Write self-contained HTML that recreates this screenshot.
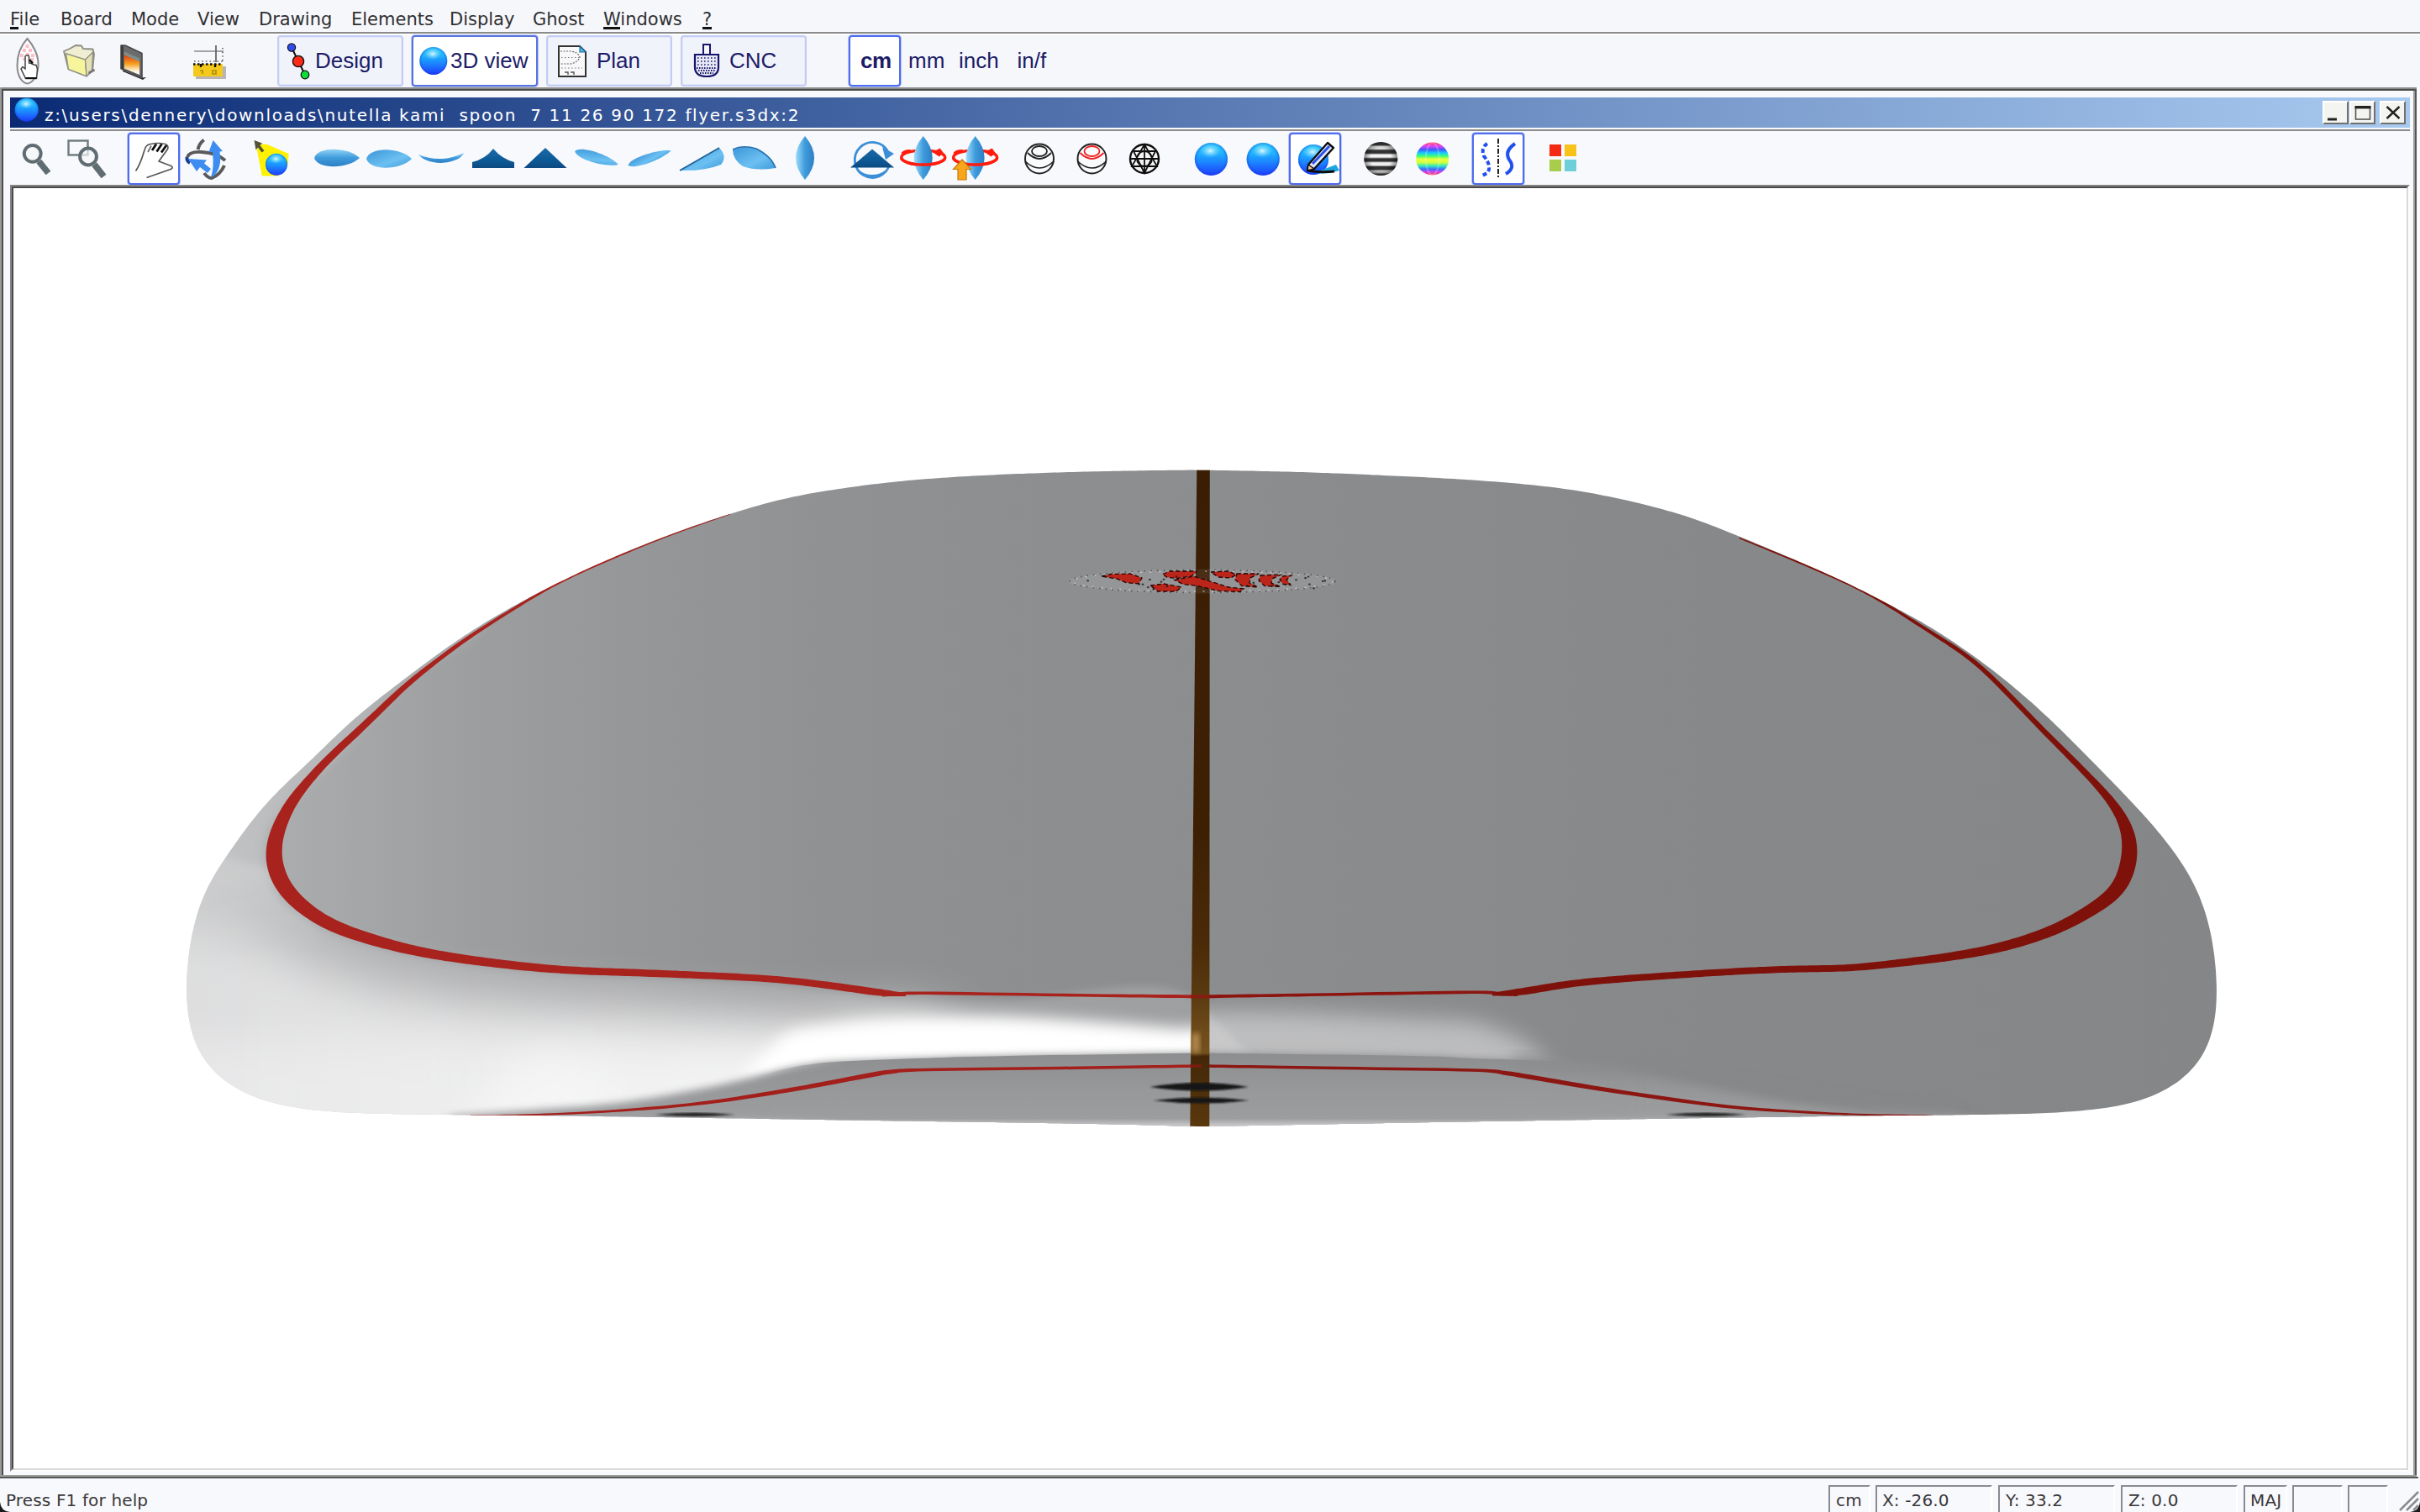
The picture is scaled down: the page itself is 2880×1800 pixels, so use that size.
<!DOCTYPE html><html><head><meta charset="utf-8"><title>Shape3d X</title><style>
html,body{margin:0;padding:0;background:#f6f7fb}
body{width:2880px;height:1800px;overflow:hidden;background:#f6f7fb;position:relative;font-family:"DejaVu Sans","Liberation Sans",sans-serif;color:#222}
.abs{position:absolute}
#menubar{left:0;top:0;width:2880px;height:38px;background:#f6f7fb}
#menubar span{position:absolute;top:9px;font-size:21px;line-height:28px;color:#303032;white-space:nowrap}
#menubar i{position:absolute;top:23px;height:2.5px;background:#111;left:0}
#menusep{left:0;top:38px;width:2880px;height:2px;background:#8b8b8c}
#menusep2{left:0;top:40px;width:2880px;height:2px;background:#fdfdfe}
.tbtn{position:absolute;top:42px;height:57px;width:146px;border:2px solid #c3cdf3;border-radius:4px;background:#f1f3fb;box-shadow:inset 0 0 0 1px #e4e8f8}
.tbtn.sel{border-color:#5873de;background:#ffffff;box-shadow:0 0 0 1px #b9c6f3}
.tlabel{position:absolute;font-family:"Liberation Sans",sans-serif;font-size:26px;line-height:30px;color:#1c1c66;white-space:nowrap}
.unit{position:absolute;top:42px;height:57px;width:58px;border:2px solid transparent;border-radius:4px}
.unit.sel{border-color:#4f6cf0;background:#fff;box-shadow:0 0 0 1px #b9c6f3}
#mdi-top{left:0;top:104px;width:2880px;height:2px;background:#8a8a8a}
#mdi-top2{left:0;top:106px;width:2880px;height:2px;background:#4c4c4c}
#mdi-left{left:0;top:104px;width:2px;height:1656px;background:#9a9a9a}
#mdi-left2{left:2px;top:106px;width:2px;height:1652px;background:#4c4c4c}
#mdi-right{left:2872px;top:108px;width:2px;height:1650px;background:#9c9c9c}
#mdi-right2{left:2874px;top:106px;width:2px;height:1654px;background:#565656}
#mdi-right3{left:2876px;top:104px;width:4px;height:1660px;background:#fbfbfd}
#mdi-bot{left:2px;top:1756px;width:2874px;height:2px;background:#9c9c9c}
#mdi-bot2{left:0px;top:1758px;width:2878px;height:2px;background:#565656}
#child{left:4px;top:108px;width:2868px;height:1648px;background:#f8f9fc}
#title{left:12px;top:116px;width:2856px;height:36px;background:linear-gradient(90deg,#0c2a74 0%,#11317b 4%,#a8caf0 100%)}
#titletext{left:53px;top:121.5px;font-size:20px;line-height:30px;color:#fff;white-space:pre;letter-spacing:1.68px;font-family:"DejaVu Sans",sans-serif}
#titleline{left:12px;top:154px;width:2856px;height:2px;background:#8c8c8c}
.wbtn{position:absolute;top:120px;width:27px;height:24px;background:#f4f4f0;border-left:2px solid #fff;border-top:2px solid #fff;border-right:2px solid #707070;border-bottom:2px solid #707070}
#canvas-b1{left:12px;top:220px;width:2852px;height:1528px;border-style:solid;border-width:2px;border-color:#868686 #fdfdfe #fdfdfe #868686}
#canvas{left:14px;top:222px;width:2848px;height:1524px;border-style:solid;border-width:2px;border-color:#4a4a4a #d9d9d9 #d9d9d9 #4a4a4a;background:#fff}
.ibtn{position:absolute;top:158px;width:58px;height:58px;border:2px solid #4f6cf0;border-radius:4px;background:#fff;box-shadow:0 0 0 1px #b9c6f3}
#status{left:0;top:1760px;width:2880px;height:40px;background:#f8f9fc}
.st{position:absolute;top:1776px;font-size:20px;line-height:20px;color:#38383a;white-space:nowrap;letter-spacing:0.15px}
.pane{position:absolute;top:1768px;height:32px;border-left:2px solid #8a8a92;border-top:2px solid #8a8a92;border-right:2px solid #fff;box-sizing:border-box}
</style></head><body>
<div id="menubar" class="abs">
<span style="left:12px">File<i style="width:10px"></i></span>
<span style="left:72px">Board</span>
<span style="left:156px">Mode</span>
<span style="left:235px">View</span>
<span style="left:308px">Drawing</span>
<span style="left:418px">Elements</span>
<span style="left:535px">Display</span>
<span style="left:634px">Ghost</span>
<span style="left:718px">Windows<i style="width:19.5px"></i></span>
<span style="left:836px">?<i style="width:10.5px"></i></span>
</div><div id="menusep" class="abs"></div><div id="menusep2" class="abs"></div>
<svg width="2880" height="1800" viewBox="0 0 2880 1800" style="position:absolute;left:0;top:0;pointer-events:none">

<defs>
<linearGradient id="sph" x1="0" y1="0" x2="0" y2="1">
 <stop offset="0" stop-color="#34d0ff"/><stop offset="0.3" stop-color="#22b4ff"/><stop offset="0.6" stop-color="#1a84ff"/><stop offset="1" stop-color="#1f3cff"/>
</linearGradient>
<radialGradient id="sphh" cx="0.5" cy="0.5" r="0.5"><stop offset="0" stop-color="#fff" stop-opacity="0.85"/><stop offset="0.5" stop-color="#c8f6ff" stop-opacity="0.4"/><stop offset="1" stop-color="#8ae8ff" stop-opacity="0"/></radialGradient>
<radialGradient id="sphr" cx="0.5" cy="0.5" r="0.5"><stop offset="0.8" stop-color="#1030d0" stop-opacity="0"/><stop offset="1" stop-color="#1030d0" stop-opacity="0.35"/></radialGradient>
<linearGradient id="brd" x1="0" y1="0" x2="0" y2="1"><stop offset="0" stop-color="#8fd2f5"/><stop offset="0.5" stop-color="#3f9bdc"/><stop offset="1" stop-color="#2b7fc4"/></linearGradient>
<linearGradient id="brd2" x1="0" y1="0" x2="1" y2="1"><stop offset="0" stop-color="#3b96d8"/><stop offset="0.6" stop-color="#6cc0f2"/><stop offset="1" stop-color="#3e9ada"/></linearGradient>
<linearGradient id="brdv" x1="0" y1="0" x2="1" y2="0"><stop offset="0" stop-color="#9ddcfa"/><stop offset="0.5" stop-color="#3f9bdc"/><stop offset="1" stop-color="#2b7fc4"/></linearGradient>
<linearGradient id="tri" x1="0" y1="0" x2="0" y2="1"><stop offset="0" stop-color="#1b6aa8"/><stop offset="0.6" stop-color="#0e5a96"/><stop offset="1" stop-color="#0a4a82"/></linearGradient>
<linearGradient id="flame" x1="0" y1="0" x2="0" y2="1"><stop offset="0" stop-color="#e23a10"/><stop offset="0.45" stop-color="#f7a020"/><stop offset="0.8" stop-color="#fff4d8"/><stop offset="1" stop-color="#ffffff"/></linearGradient>
<linearGradient id="stripes" x1="0" y1="0" x2="0" y2="1">
 <stop offset="0" stop-color="#444"/><stop offset="0.09" stop-color="#444"/><stop offset="0.13" stop-color="#eee"/><stop offset="0.2" stop-color="#eee"/>
 <stop offset="0.25" stop-color="#333"/><stop offset="0.33" stop-color="#333"/><stop offset="0.38" stop-color="#f2f2f2"/><stop offset="0.45" stop-color="#f2f2f2"/>
 <stop offset="0.5" stop-color="#333"/><stop offset="0.57" stop-color="#333"/><stop offset="0.62" stop-color="#eee"/><stop offset="0.69" stop-color="#eee"/>
 <stop offset="0.74" stop-color="#333"/><stop offset="0.81" stop-color="#333"/><stop offset="0.86" stop-color="#ddd"/><stop offset="0.91" stop-color="#ddd"/><stop offset="0.96" stop-color="#444"/>
</linearGradient>
<radialGradient id="shade" cx="0.5" cy="0.5" r="0.5"><stop offset="0.6" stop-color="#000" stop-opacity="0"/><stop offset="1" stop-color="#000" stop-opacity="0.45"/></radialGradient>
<linearGradient id="rainbow" x1="0" y1="0" x2="0" y2="1">
 <stop offset="0" stop-color="#ff3a5c"/><stop offset="0.12" stop-color="#e040fb"/><stop offset="0.22" stop-color="#3d5afe"/><stop offset="0.32" stop-color="#18c8ff"/>
 <stop offset="0.42" stop-color="#40ff70"/><stop offset="0.52" stop-color="#f4ff3a"/><stop offset="0.62" stop-color="#c8ff40"/><stop offset="0.72" stop-color="#30e8c0"/>
 <stop offset="0.82" stop-color="#3d6cfe"/><stop offset="0.9" stop-color="#d040f0"/><stop offset="1" stop-color="#ff3a4c"/>
</linearGradient>
<filter id="ib"><feGaussianBlur stdDeviation="0.7"/></filter>
<filter id="ib2"><feGaussianBlur stdDeviation="1.1"/></filter>
</defs>

<g filter="url(#ib)">
<path d="M32.5 46 C40 54 46 66 45.5 78 C45 90 39 99 32.5 99.5 C26 99 20.5 90 20.5 78 C20.5 66 25 54 32.5 46Z" fill="#fbfbfd" stroke="#8a8a8c" stroke-width="2"/>
<path d="M27 58 h4 v4 h-4z M34 58 h4 v4 h-4z M30.5 53 h4 v4 h-4z M24 64 h4 v4 h-4z M31 63 h4 v4 h-4z M37 64 h4 v4 h-4z M27 69 h4 v3 h-4z M36 69 h4 v4 h-4z" fill="#ffb8c0" opacity="0.9"/>
<path d="M30 67 L30 82 L27 79.5 L25 82 L30.5 93.5 L43.5 93.5 L44.5 82 L43 77.5 L40 77 L37 75.5 L34.5 75 L34.5 67 Q32 64.5 30 67Z" fill="#fff" stroke="#444" stroke-width="1.5"/>
<path d="M30.5 93 H43.5" stroke="#111" stroke-width="2"/>
<path d="M35 71 L39 75.5" stroke="#111" stroke-width="2.6"/>
<path d="M76 61 L83 58 L90 54 L97 54.5 L99 58 L110.5 58.5 L112 64.5 L110 84 L103 90.6 L81.4 82.4 Z" fill="#f0eed2" stroke="#8c8c84" stroke-width="1.8" stroke-linejoin="round"/>
<path d="M78.5 63.8 L101.5 71 L103 90.6 L81.4 82.4 Z" fill="#f7f59c" stroke="#96968a" stroke-width="1.5" stroke-linejoin="round"/>
<path d="M101.5 71 L110.5 62 L109.5 84 L103 90.6Z" fill="#e4e2b4" stroke="#8c8c84" stroke-width="1.2"/>
<path d="M105.5 87 L112.5 83" stroke="#777" stroke-width="3"/>
<path d="M144 54 L149 54 L169 63.5 L169 92 L144 81.7 Z" fill="#6c6c6e" stroke="#4a4a4c" stroke-width="1.6" stroke-linejoin="round"/>
<path d="M144 54 L147 54 L147 83 L144 81.7Z" fill="#3c3c3e"/>
<path d="M148 61.5 L166 69.5 L166 74 L148 66Z" fill="#7f8f88"/>
<path d="M148 65.5 L166 73.5 L166 89 L148 81.5 Z" fill="url(#flame)"/>
<path d="M146 83.5 L168 92.5 L174 92 L170 95 L146 85Z" fill="#2c2c2e"/>
<rect x="233" y="79" width="36" height="15" fill="#b9b4b8"/>
<rect x="230" y="76" width="35" height="15" fill="#f5c81a"/>
<path d="M230 76.5 H265" stroke="#111" stroke-width="2.4" stroke-dasharray="2.5 2.5"/>
<path d="M239 76 V80 M256 76 V80" stroke="#111" stroke-width="2.4"/>
<path d="M238 84 h3 v4 M253 84 h4 v4 h-4 z" stroke="#b08c10" stroke-width="1.6" fill="none"/>
<path d="M231 61 H266" stroke="#888" stroke-width="1.6"/>
<path d="M257 54 V74" stroke="#666" stroke-width="1.8"/>
<path d="M265 57 V74 M231 73 H266" stroke="#666" stroke-width="1.6" stroke-dasharray="1.6 3"/>
</g></svg>
<div class="tbtn" style="left:330px"></div>
<div class="tbtn sel" style="left:490px"></div>
<div class="tbtn" style="left:650px"></div>
<div class="tbtn" style="left:810px"></div>
<svg width="2880" height="1800" viewBox="0 0 2880 1800" style="position:absolute;left:0;top:0;pointer-events:none">
<g filter="url(#ib)">
<path d="M347 56.5 L363 89" stroke="#111" stroke-width="2"/>
<circle cx="347" cy="56.5" r="4.6" fill="#2d4cf0" stroke="#111" stroke-width="1.2"/>
<circle cx="355" cy="73" r="6.6" fill="#ff2a18" stroke="#111" stroke-width="1.4"/>
<circle cx="363" cy="89" r="4.8" fill="#10dd38" stroke="#111" stroke-width="1.2"/>
<circle cx="515.8" cy="72.4" r="16.5" fill="url(#sph)"/><circle cx="515.8" cy="72.4" r="16.5" fill="url(#sphr)"/><ellipse cx="515.0" cy="64.2" rx="10.2" ry="6.9" fill="url(#sphh)"/>
<path d="M665 55 H690 L697 62 V91 H665 Z" fill="#f8f8fa" stroke="#333" stroke-width="2"/>
<path d="M690 55 L697 62 H690 Z" fill="#4fb8ea" stroke="#1d6c9c" stroke-width="1.2"/>
<path d="M667 61 H679 Q688 62 690 68 Q688 74 679 76 H667" fill="none" stroke="#666" stroke-width="1.2" stroke-dasharray="2 1.5"/>
<path d="M668 68.5 H690 M668 81 H693" stroke="#777" stroke-width="1.2" stroke-dasharray="1.5 2.5"/>
<path d="M672 86 h4 v3 M679 86 h4 v3" stroke="#555" stroke-width="1.4" fill="none"/>
<rect x="837" y="53" width="8" height="12" fill="#f8f8fc" stroke="#17176a" stroke-width="2"/>
<path d="M827 65 H855 V80 Q855 91 841 91 Q827 91 827 80 Z" fill="#e8e9f6" stroke="#17176a" stroke-width="2.2"/>
<path d="M830 69 H853 M830 73 H853 M830 77 H853" stroke="#17176a" stroke-width="1.6" stroke-dasharray="1.6 2.4"/>
<path d="M829 81 H853 M831 84 H851 M833 87 H849" stroke="#17176a" stroke-width="2" stroke-dasharray="1.5 1.5"/>
</g></svg>
<div class="tlabel" style="left:375px;top:57px">Design</div>
<div class="tlabel" style="left:536px;top:57px">3D view</div>
<div class="tlabel" style="left:710px;top:57px">Plan</div>
<div class="tlabel" style="left:868px;top:57px">CNC</div>
<div class="unit sel" style="left:1010px"></div>
<div class="tlabel" style="left:1024px;top:57px;font-weight:bold;letter-spacing:-0.5px">cm</div>
<div class="tlabel" style="left:1081px;top:57px">mm</div>
<div class="tlabel" style="left:1141px;top:57px">inch</div>
<div class="tlabel" style="left:1210.5px;top:57px">in/f</div>
<div id="mdi-top" class="abs"></div>
<div id="mdi-top2" class="abs"></div>
<div id="child" class="abs"></div>
<div id="mdi-left" class="abs"></div>
<div id="mdi-left2" class="abs"></div>
<div id="mdi-right" class="abs"></div>
<div id="mdi-right2" class="abs"></div>
<div id="mdi-right3" class="abs"></div>
<div id="mdi-bot" class="abs"></div>
<div id="mdi-bot2" class="abs"></div>
<div id="title" class="abs"></div>
<div id="titletext" class="abs">z:\users\dennery\downloads\nutella kami  spoon  7 11 26 90 172 flyer.s3dx:2</div>
<div id="titleline" class="abs"></div>
<div class="wbtn" style="left:2764px"></div><div class="wbtn" style="left:2796px"></div><div class="wbtn" style="left:2832px"></div>
<svg width="2880" height="1800" viewBox="0 0 2880 1800" style="position:absolute;left:0;top:0;pointer-events:none">
<rect x="2770" y="140.5" width="11" height="3" fill="#222"/>
<rect x="2803.5" y="127" width="17" height="15" fill="none" stroke="#555" stroke-width="1.6"/><rect x="2802.5" y="126" width="19" height="3.4" fill="#222"/>
<path d="M2840.5 127 L2855.5 141 M2855.5 127 L2840.5 141" stroke="#222" stroke-width="2.4"/>
</svg>
<div class="ibtn" style="left:152px"></div><div class="ibtn" style="left:1534px"></div><div class="ibtn" style="left:1752px"></div>
<svg width="2880" height="1800" viewBox="0 0 2880 1800" style="position:absolute;left:0;top:0;pointer-events:none">
<g filter="url(#ib)">
<circle cx="31.7" cy="130.7" r="14.0" fill="url(#sph)"/><circle cx="31.7" cy="130.7" r="14.0" fill="url(#sphr)"/><ellipse cx="31.0" cy="123.7" rx="8.7" ry="5.9" fill="url(#sphh)"/>
<circle cx="38.7" cy="182.8" r="9.9" fill="#f4f6f8" fill-opacity="0.7" stroke="#5f6d72" stroke-width="4"/><path d="M46.2 192.0 L57.5 206.0" stroke="#5f6d72" stroke-width="7.5" stroke-linecap="butt"/>
<rect x="81.5" y="167.5" width="23" height="17" fill="none" stroke="#6d7a80" stroke-width="2.4"/>
<circle cx="105.0" cy="186.5" r="9.9" fill="#f4f6f8" fill-opacity="0.7" stroke="#5f6d72" stroke-width="4"/><path d="M112.4 195.9 L123.5 210.0" stroke="#5f6d72" stroke-width="7.5" stroke-linecap="butt"/>
<path d="M161.5 203.5 C167 196 169.5 187 172 178.5 C173 174 176 172 179 171.5 L182.5 171 L186 170.5 L190 170.5 L194 171 C198 171 201 173.5 199.5 177.5 L189 192 L203.5 197.5 C206 198.5 205.5 200.5 203 201.5 L174.5 211.5" fill="#fff" stroke="#555" stroke-width="1.7" stroke-linejoin="round"/>
<path d="M181 179 L186 171.5 M186.5 180.5 L192.5 171.5 M192 181.5 L198 173" stroke="#111" stroke-width="2.8"/>
<path d="M176 181 L180 173.5" stroke="#666" stroke-width="1.6"/>
<path d="M242.7 166.5 Q237 171 235.5 178" fill="none" stroke="#5a5a5a" stroke-width="4"/>
<path d="M223 187 Q225 180 240 181 Q258 182 268 191" fill="none" stroke="#5a5a5a" stroke-width="4"/>
<path d="M243 206 Q247 212 252 212 Q262 208 267 197" fill="none" stroke="#5a5a5a" stroke-width="4"/>
<path d="M222.5 187 Q222 192 226 194" fill="none" stroke="#1c3e8c" stroke-width="4"/>
<path d="M253.6 167 L265 180 L261.5 180.5 Q264 196 258 205 Q255 210 251 211 Q255 200 253 181 L248.5 181 Z" fill="#3d8cf0"/>
<path d="M224 189 L246 190.5 L243 194.5 L251 201 L247 206 L238 199 L234 204 Z" fill="#3d8cf0"/>
<path d="M304 170.5 L318 172 L343.6 183 L342.7 196 L331 209.5 L311.8 209.5 L306.4 181 Z" fill="#fff200"/>
<path d="M302.5 167 L312 170.5 L309.5 173 L314.5 179.5 L311.5 181.5 L307 175.5 L304.5 178.5 Z" fill="#55523a"/>
<circle cx="329.0" cy="195.8" r="13.0" fill="url(#sph)"/><circle cx="329.0" cy="195.8" r="13.0" fill="url(#sphr)"/><ellipse cx="328.4" cy="189.3" rx="8.1" ry="5.5" fill="url(#sphh)"/>
<path d="M374.0 188.0 C378.1 173.8 414.5 174.9 428.0 188.0 C414.5 201.1 378.1 202.2 374.0 188.0 Z" fill="url(#brd)"/>
<path d="M436.0 189.0 C440.1 174.2 476.5 175.2 490.0 189.0 C476.5 202.8 440.1 203.8 436.0 189.0 Z" fill="url(#brd2)"/>
<path d="M498 184 Q525 195 552 182 Q548 192 525 194 Q505 193 498 184Z" fill="url(#brd)"/>
<path d="M587 177 Q597 189 612 193 L612 200 L562 200 L562 193 Q578 189 587 177Z" fill="url(#tri)"/>
<path d="M649 176 L674.5 200 L623.5 200 Z" fill="url(#tri)"/>
<g transform="rotate(17 710 188)"><path d="M683.0 188.0 C687.0 179.2 723.5 179.9 737.0 188.0 C723.5 196.1 687.0 196.8 683.0 188.0 Z" fill="url(#brd2)"/></g>
<g transform="rotate(-19 773 188)"><path d="M746.0 188.0 C750.0 180.6 786.5 181.1 800.0 188.0 C786.5 194.9 750.0 195.4 746.0 188.0 Z" fill="url(#brd2)"/></g>
<path d="M809 203 Q835 188 856 176 Q866 186 858 196 Q838 204 809 203Z" fill="url(#brd2)"/>
<path d="M809 203 Q835 188 856 176" stroke="#1d5f96" stroke-width="1.6" fill="none"/>
<path d="M872 178 Q884 172 900 177 Q918 186 923 200 Q900 204 884 198 Q872 190 872 178Z" fill="url(#brd2)"/>
<path d="M872 178 Q884 172 900 177 Q918 186 923 200" stroke="#2a72ae" stroke-width="1.6" fill="none"/>
<path d="M958 162 Q980 188 958 214 Q936 188 958 162Z" fill="url(#brdv)"/>
<path d="M1056.5 180 A21 21 0 1 0 1058.5 196" fill="none" stroke="#3b8fd6" stroke-width="2.8"/>
<path d="M1022 204 A21 15 0 0 0 1054 204" fill="none" stroke="#3b8fd6" stroke-width="2.6"/>
<path d="M1050 175 L1064 183 L1054 190 Z" fill="#3b8fd6"/>
<path d="M1038 177.5 L1064 199.5 L1012 199.5 Z" fill="url(#tri)"/>
<ellipse cx="1098.7" cy="187.5" rx="26" ry="8.5" fill="none" stroke="#ff1c10" stroke-width="3.4"/>
<path d="M1098.7 162 Q1120.7 188 1098.7 214 Q1076.7 188 1098.7 162Z" fill="url(#brdv)"/>
<path d="M1124.7 187.5 A26 8.5 0 0 1 1072.7 187.5" fill="none" stroke="#ff1c10" stroke-width="3.4"/>
<path d="M1118.7 176.5 L1109.7 181 L1117.7 186.5 L1122.7 182 Z" fill="#ff1c10"/>
<path d="M1073.7 183 Q1076.7 179 1083.7 179.5" fill="none" stroke="#ff1c10" stroke-width="3"/>
<ellipse cx="1160.6" cy="187.5" rx="26" ry="8.5" fill="none" stroke="#ff1c10" stroke-width="3.4"/>
<path d="M1160.6 162 Q1182.6 188 1160.6 214 Q1138.6 188 1160.6 162Z" fill="url(#brdv)"/>
<path d="M1186.6 187.5 A26 8.5 0 0 1 1134.6 187.5" fill="none" stroke="#ff1c10" stroke-width="3.4"/>
<path d="M1180.6 176.5 L1171.6 181 L1179.6 186.5 L1184.6 182 Z" fill="#ff1c10"/>
<path d="M1135.6 183 Q1138.6 179 1145.6 179.5" fill="none" stroke="#ff1c10" stroke-width="3"/>
<path d="M1145 190 L1155.5 201.5 L1150 201.5 L1150 214 L1140 214 L1140 201.5 L1134.5 201.5 Z" fill="#f9a61a" stroke="#c47a08" stroke-width="1.2"/>
<ellipse cx="1237.0" cy="189" rx="17" ry="17.5" fill="#fafbfd" stroke="#222" stroke-width="2"/>
<ellipse cx="1237.0" cy="180" rx="9" ry="6" fill="none" stroke="#222" stroke-width="1.8"/>
<path d="M1223.0 182 Q1237.0 196 1251.0 182" fill="none" stroke="#222" stroke-width="1.8"/>
<path d="M1220.0 192 Q1237.0 208 1254.0 192" fill="none" stroke="#222" stroke-width="1.6"/>
<ellipse cx="1299.5" cy="189" rx="17" ry="17.5" fill="#fafbfd" stroke="#222" stroke-width="2"/>
<ellipse cx="1299.5" cy="180" rx="9" ry="6" fill="none" stroke="#ee2020" stroke-width="1.8"/>
<path d="M1285.5 182 Q1299.5 196 1313.5 182" fill="none" stroke="#ee2020" stroke-width="1.8"/>
<path d="M1282.5 192 Q1299.5 208 1316.5 192" fill="none" stroke="#222" stroke-width="1.6"/>
<circle cx="1362" cy="189" r="17" fill="#f4f4f6" stroke="#111" stroke-width="2.4"/>
<path d="M1362 172 L1347 198 L1377 198 Z M1362 206 L1349 180 L1375 180 Z M1345 189 H1379 M1362 172 V206" fill="none" stroke="#111" stroke-width="1.8"/>
<circle cx="1362" cy="189" r="9" fill="none" stroke="#111" stroke-width="1.8"/>
<circle cx="1441.4" cy="189.5" r="19.6" fill="url(#sph)"/><circle cx="1441.4" cy="189.5" r="19.6" fill="url(#sphr)"/><ellipse cx="1440.4" cy="179.7" rx="12.2" ry="8.2" fill="url(#sphh)"/>
<circle cx="1503.2" cy="189.5" r="19.6" fill="url(#sph)"/><circle cx="1503.2" cy="189.5" r="19.6" fill="url(#sphr)"/><ellipse cx="1502.2" cy="179.7" rx="12.2" ry="8.2" fill="url(#sphh)"/>
<circle cx="1563.0" cy="190.0" r="18.0" fill="url(#sph)"/><circle cx="1563.0" cy="190.0" r="18.0" fill="url(#sphr)"/><ellipse cx="1562.1" cy="181.0" rx="11.2" ry="7.6" fill="url(#sphh)"/>
<path d="M1566 205 L1590 196 L1594 203 Q1580 208 1566 206Z" fill="#1aa6e0"/>
<path d="M1556 203 Q1570 206 1588 204" stroke="#111" stroke-width="3" fill="none"/>
<path d="M1557 196 L1580 170 L1587 176 L1564 201 L1556 203 Z" fill="#dfe8ff" stroke="#111" stroke-width="2.4" stroke-linejoin="round"/>
<path d="M1562 195 L1582 174" stroke="#2a50e8" stroke-width="3"/>
<path d="M1557 196 L1564 201 L1556 203Z" fill="#f7c89a" stroke="#111" stroke-width="1.4"/>
<circle cx="1643.3" cy="189" r="20" fill="url(#stripes)"/><circle cx="1643.3" cy="189" r="20" fill="url(#shade)"/>
<circle cx="1704.7" cy="189" r="19.5" fill="url(#rainbow)"/>
<ellipse cx="1704.7" cy="189" rx="8" ry="19" fill="none" stroke="#fff" stroke-opacity="0.25" stroke-width="2"/>
<path d="M1770 171 Q1762 176 1766 186 Q1776 198 1770 206 L1764 209" fill="none" stroke="#2050f0" stroke-width="4" stroke-dasharray="5 3"/>
<path d="M1783 165 V211" stroke="#222" stroke-width="2" stroke-dasharray="6 2 2 2"/>
<path d="M1803 171 Q1790 180 1796 190 Q1804 200 1792 207" fill="none" stroke="#2050f0" stroke-width="4"/>
</g>
<rect x="1844" y="172" width="14" height="14" fill="#f52a14"/><rect x="1862" y="172" width="14" height="14" fill="#f9c21a"/>
<rect x="1844" y="190" width="14" height="14" fill="#a8cc4c"/><rect x="1862" y="190" width="14" height="14" fill="#6ecfd8"/>
</svg>
<div id="canvas-b1" class="abs"></div>
<div id="canvas" class="abs"></div>
<div class="abs" style="left:16px;top:224px;width:2848px;height:1524px;overflow:hidden"><svg id="board" width="2848" height="1524" viewBox="16 224 2848 1524" style="position:absolute;left:0;top:0">
<defs>
<clipPath id="sil"><path d="M1431.7 559.7L1437.4 559.7L1443.1 559.8L1448.8 559.9L1454.6 560.0L1460.4 560.1L1466.3 560.2L1472.2 560.3L1478.1 560.4L1484.1 560.5L1490.0 560.6L1496.0 560.7L1502.0 560.9L1508.0 561.0L1514.0 561.2L1520.0 561.3L1526.0 561.5L1532.0 561.6L1538.0 561.8L1544.0 561.9L1550.0 562.1L1556.0 562.3L1562.0 562.5L1568.0 562.7L1574.0 562.9L1580.0 563.1L1585.9 563.4L1591.9 563.6L1597.9 563.8L1603.9 564.1L1609.9 564.3L1615.9 564.6L1621.9 564.8L1627.9 565.1L1633.9 565.4L1639.9 565.6L1645.9 565.9L1651.9 566.2L1657.9 566.4L1663.9 566.7L1669.9 567.0L1675.9 567.3L1681.9 567.5L1687.8 567.8L1693.8 568.1L1699.8 568.4L1705.8 568.7L1711.8 569.0L1717.8 569.4L1723.8 569.7L1729.8 570.1L1735.8 570.4L1741.8 570.8L1747.8 571.2L1753.7 571.6L1759.7 572.0L1765.7 572.4L1771.7 572.9L1777.7 573.3L1783.7 573.8L1789.6 574.3L1795.6 574.8L1801.6 575.3L1807.6 575.8L1813.5 576.4L1819.5 576.9L1825.5 577.6L1831.4 578.2L1837.4 578.9L1843.4 579.6L1849.3 580.3L1855.3 581.1L1861.2 581.9L1867.1 582.8L1873.1 583.6L1879.0 584.6L1884.9 585.6L1890.8 586.6L1896.7 587.6L1902.6 588.7L1908.5 589.9L1914.4 591.1L1920.3 592.3L1926.1 593.5L1932.0 594.8L1937.8 596.1L1943.7 597.5L1949.5 598.8L1955.3 600.3L1961.2 601.7L1967.0 603.2L1972.8 604.7L1978.6 606.3L1984.3 607.9L1990.1 609.5L1995.9 611.2L2001.6 613.0L2007.3 614.8L2013.0 616.7L2018.6 618.7L2024.3 620.7L2029.9 622.8L2035.5 624.9L2041.1 627.1L2046.7 629.3L2052.2 631.5L2057.8 633.7L2063.4 636.0L2068.9 638.3L2074.5 640.5L2080.0 642.8L2085.5 645.1L2091.1 647.4L2096.6 649.7L2102.2 652.1L2107.7 654.4L2113.2 656.7L2118.7 659.1L2124.3 661.4L2129.8 663.8L2135.3 666.1L2140.8 668.5L2146.3 670.8L2151.8 673.2L2157.3 675.6L2162.8 678.1L2168.3 680.5L2173.8 683.0L2179.2 685.4L2184.7 687.9L2190.1 690.5L2195.5 693.0L2200.9 695.6L2206.3 698.2L2211.7 700.9L2217.1 703.6L2222.5 706.3L2227.8 709.0L2233.1 711.7L2238.5 714.5L2243.8 717.2L2249.1 720.0L2254.4 722.8L2259.7 725.7L2265.0 728.5L2270.3 731.4L2275.5 734.3L2280.7 737.2L2286.0 740.1L2291.1 743.2L2296.3 746.2L2301.4 749.3L2306.5 752.5L2311.6 755.7L2316.6 758.9L2321.6 762.2L2326.6 765.6L2331.5 769.0L2336.5 772.4L2341.4 775.8L2346.3 779.3L2351.1 782.8L2356.0 786.3L2360.8 789.9L2365.6 793.5L2370.4 797.1L2375.1 800.8L2379.8 804.5L2384.5 808.3L2389.2 812.0L2393.8 815.8L2398.4 819.7L2403.0 823.6L2407.5 827.5L2412.1 831.4L2416.6 835.3L2421.1 839.3L2425.5 843.3L2429.9 847.4L2434.3 851.5L2438.7 855.6L2443.1 859.7L2447.4 863.9L2451.7 868.0L2456.0 872.2L2460.2 876.4L2464.5 880.7L2468.7 884.9L2473.0 889.2L2477.2 893.4L2481.4 897.7L2485.6 902.0L2489.8 906.3L2494.0 910.5L2498.2 914.8L2502.4 919.1L2506.6 923.4L2510.8 927.7L2515.0 932.0L2519.1 936.3L2523.3 940.6L2527.5 945.0L2531.6 949.3L2535.7 953.7L2539.8 958.0L2543.9 962.4L2548.0 966.8L2552.0 971.3L2556.0 975.7L2560.0 980.3L2563.9 984.8L2567.7 989.4L2571.6 994.0L2575.3 998.7L2579.0 1003.4L2582.6 1008.1L2586.2 1012.9L2589.7 1017.8L2593.1 1022.7L2596.4 1027.7L2599.6 1032.7L2602.7 1037.8L2605.7 1043.0L2608.5 1048.2L2611.2 1053.5L2613.8 1058.9L2616.2 1064.3L2618.5 1069.8L2620.6 1075.4L2622.6 1081.0L2624.5 1086.7L2626.2 1092.4L2627.7 1098.1L2629.2 1103.9L2630.5 1109.8L2631.7 1115.6L2632.8 1121.5L2633.7 1127.4L2634.6 1133.3L2635.4 1139.2L2636.0 1145.2L2636.6 1151.1L2637.1 1157.1L2637.4 1163.1L2637.7 1169.1L2637.9 1175.0L2637.9 1181.0L2637.8 1187.0L2637.6 1192.9L2637.2 1198.9L2636.7 1204.8L2635.9 1210.7L2635.0 1216.5L2633.8 1222.3L2632.4 1228.0L2630.8 1233.6L2628.9 1239.2L2626.7 1244.6L2624.3 1249.8L2621.5 1254.9L2618.5 1259.9L2615.2 1264.6L2611.6 1269.2L2607.7 1273.6L2603.7 1277.7L2599.3 1281.6L2594.8 1285.4L2590.1 1288.9L2585.3 1292.1L2580.2 1295.2L2575.1 1298.1L2569.8 1300.8L2564.4 1303.3L2559.0 1305.5L2553.4 1307.6L2547.8 1309.5L2542.1 1311.3L2536.4 1312.8L2530.6 1314.3L2524.8 1315.5L2518.9 1316.7L2513.0 1317.7L2507.1 1318.7L2501.2 1319.5L2495.3 1320.3L2489.3 1321.0L2483.4 1321.6L2477.4 1322.2L2471.4 1322.7L2465.4 1323.2L2459.5 1323.6L2453.5 1324.0L2447.5 1324.4L2441.5 1324.7L2435.5 1325.0L2429.5 1325.2L2423.5 1325.5L2417.5 1325.7L2411.5 1325.9L2405.5 1326.1L2399.5 1326.2L2393.5 1326.3L2387.5 1326.5L2381.5 1326.6L2375.5 1326.7L2369.5 1326.8L2363.5 1326.9L2357.5 1327.0L2351.5 1327.0L2345.5 1327.1L2339.5 1327.2L2333.5 1327.3L2327.5 1327.3L2321.5 1327.4L2315.5 1327.4L2309.5 1327.5L2303.5 1327.5L2297.5 1327.6L2291.5 1327.7L2285.5 1327.7L2279.5 1327.8L2273.5 1327.8L2267.5 1327.9L2261.5 1327.9L2255.5 1328.0L2249.5 1328.0L2243.5 1328.1L2237.5 1328.2L2231.5 1328.2L2225.5 1328.3L2219.5 1328.4L2213.5 1328.5L2207.5 1328.5L2201.5 1328.6L2195.5 1328.7L2189.5 1328.8L2183.6 1328.8L2177.6 1328.9L2171.6 1329.0L2165.6 1329.1L2159.6 1329.2L2153.6 1329.2L2147.6 1329.3L2141.6 1329.4L2135.6 1329.5L2129.6 1329.6L2123.6 1329.7L2117.6 1329.8L2111.6 1329.8L2105.6 1329.9L2099.6 1330.0L2093.6 1330.1L2087.6 1330.2L2081.6 1330.3L2075.6 1330.4L2069.6 1330.4L2063.6 1330.5L2057.6 1330.6L2051.6 1330.7L2045.6 1330.8L2039.6 1330.9L2033.6 1331.0L2027.6 1331.1L2021.6 1331.2L2015.6 1331.3L2009.6 1331.3L2003.6 1331.4L1997.6 1331.5L1991.6 1331.6L1985.6 1331.7L1979.6 1331.8L1973.6 1331.9L1967.6 1332.0L1961.6 1332.1L1955.6 1332.2L1949.6 1332.2L1943.6 1332.3L1937.6 1332.4L1931.6 1332.5L1925.6 1332.6L1919.6 1332.7L1913.6 1332.8L1907.6 1332.9L1901.6 1333.0L1895.6 1333.1L1889.6 1333.2L1883.6 1333.2L1877.6 1333.3L1871.6 1333.4L1865.6 1333.5L1859.6 1333.6L1853.6 1333.7L1847.6 1333.8L1841.6 1333.9L1835.6 1334.0L1829.6 1334.1L1823.6 1334.2L1817.6 1334.3L1811.6 1334.4L1805.6 1334.4L1799.6 1334.5L1793.6 1334.6L1787.6 1334.7L1781.6 1334.8L1775.6 1334.9L1769.6 1335.0L1763.6 1335.1L1757.6 1335.2L1751.6 1335.3L1745.6 1335.4L1739.6 1335.5L1733.6 1335.6L1727.6 1335.7L1721.6 1335.8L1715.6 1335.9L1709.6 1336.0L1703.6 1336.1L1697.6 1336.2L1691.6 1336.3L1685.6 1336.4L1679.6 1336.5L1673.6 1336.6L1667.6 1336.7L1661.6 1336.8L1655.6 1336.9L1649.6 1337.1L1643.6 1337.2L1637.6 1337.3L1631.6 1337.4L1625.6 1337.5L1619.6 1337.6L1613.6 1337.7L1607.6 1337.8L1601.6 1337.9L1595.6 1338.1L1589.6 1338.2L1583.6 1338.3L1577.6 1338.4L1571.6 1338.5L1565.6 1338.6L1559.6 1338.7L1553.6 1338.9L1547.6 1339.0L1541.6 1339.1L1535.6 1339.2L1529.6 1339.3L1523.6 1339.4L1517.6 1339.5L1511.6 1339.7L1505.6 1339.8L1499.6 1339.9L1493.7 1340.0L1487.7 1340.1L1481.7 1340.2L1475.8 1340.3L1469.9 1340.4L1464.0 1340.5L1458.2 1340.6L1452.5 1340.7L1446.9 1340.8L1441.3 1340.8L1435.9 1340.9L1430.5 1340.9L1425.2 1340.9L1419.9 1340.8L1414.6 1340.8L1409.3 1340.7L1403.8 1340.6L1398.3 1340.4L1392.7 1340.3L1387.0 1340.1L1381.2 1340.0L1375.4 1339.8L1369.5 1339.6L1363.6 1339.5L1357.6 1339.3L1351.6 1339.1L1345.6 1339.0L1339.6 1338.8L1333.6 1338.7L1327.6 1338.6L1321.6 1338.4L1315.7 1338.3L1309.7 1338.2L1303.7 1338.1L1297.7 1338.0L1291.7 1337.9L1285.7 1337.8L1279.7 1337.7L1273.7 1337.5L1267.7 1337.4L1261.7 1337.3L1255.7 1337.3L1249.7 1337.2L1243.7 1337.1L1237.7 1337.0L1231.7 1336.9L1225.7 1336.8L1219.7 1336.7L1213.7 1336.6L1207.7 1336.5L1201.7 1336.4L1195.7 1336.3L1189.7 1336.2L1183.7 1336.1L1177.7 1336.0L1171.7 1336.0L1165.7 1335.9L1159.7 1335.8L1153.7 1335.7L1147.7 1335.6L1141.7 1335.5L1135.7 1335.4L1129.7 1335.3L1123.7 1335.3L1117.7 1335.2L1111.7 1335.1L1105.7 1335.0L1099.7 1334.9L1093.7 1334.8L1087.7 1334.7L1081.7 1334.6L1075.7 1334.6L1069.7 1334.5L1063.7 1334.4L1057.7 1334.3L1051.7 1334.2L1045.7 1334.1L1039.7 1334.0L1033.7 1333.9L1027.7 1333.8L1021.7 1333.8L1015.7 1333.7L1009.7 1333.6L1003.7 1333.5L997.7 1333.4L991.7 1333.3L985.7 1333.2L979.7 1333.1L973.7 1333.0L967.7 1333.0L961.7 1332.9L955.7 1332.8L949.7 1332.7L943.7 1332.6L937.7 1332.5L931.7 1332.4L925.7 1332.3L919.7 1332.2L913.7 1332.1L907.7 1332.0L901.7 1331.9L895.7 1331.8L889.7 1331.7L883.7 1331.6L877.7 1331.6L871.7 1331.5L865.7 1331.4L859.7 1331.3L853.7 1331.2L847.7 1331.1L841.7 1331.0L835.7 1330.9L829.7 1330.8L823.7 1330.7L817.7 1330.6L811.7 1330.5L805.7 1330.4L799.7 1330.3L793.7 1330.2L787.7 1330.1L781.7 1330.1L775.7 1330.0L769.7 1329.9L763.7 1329.8L757.7 1329.7L751.7 1329.6L745.7 1329.5L739.7 1329.4L733.7 1329.3L727.7 1329.2L721.7 1329.2L715.7 1329.1L709.7 1329.0L703.7 1328.9L697.7 1328.8L691.7 1328.7L685.7 1328.6L679.7 1328.6L673.7 1328.5L667.7 1328.4L661.7 1328.3L655.7 1328.3L649.7 1328.2L643.7 1328.1L637.7 1328.1L631.7 1328.0L625.7 1327.9L619.7 1327.9L613.7 1327.8L607.7 1327.8L601.7 1327.7L595.7 1327.7L589.7 1327.6L583.7 1327.6L577.7 1327.5L571.7 1327.5L565.7 1327.4L559.7 1327.4L553.7 1327.3L547.7 1327.2L541.7 1327.2L535.7 1327.1L529.7 1327.1L523.7 1327.0L517.7 1326.9L511.7 1326.8L505.7 1326.8L499.7 1326.7L493.7 1326.6L487.7 1326.5L481.7 1326.4L475.7 1326.3L469.7 1326.2L463.7 1326.0L457.7 1325.9L451.7 1325.8L445.8 1325.6L439.8 1325.4L433.8 1325.2L427.8 1325.0L421.8 1324.8L415.8 1324.5L409.8 1324.2L403.8 1323.9L397.8 1323.5L391.8 1323.0L385.9 1322.5L379.9 1322.0L373.9 1321.4L368.0 1320.7L362.1 1319.9L356.1 1319.1L350.2 1318.1L344.3 1317.1L338.5 1315.9L332.6 1314.7L326.8 1313.3L321.1 1311.7L315.4 1310.0L309.7 1308.2L304.2 1306.1L298.7 1303.9L293.3 1301.5L288.0 1298.9L282.8 1296.1L277.7 1293.1L272.8 1289.9L268.0 1286.4L263.4 1282.8L259.0 1279.0L254.8 1274.9L250.9 1270.6L247.1 1266.2L243.7 1261.5L240.5 1256.6L237.6 1251.6L235.0 1246.4L232.7 1241.1L230.6 1235.6L228.8 1230.0L227.3 1224.4L226.0 1218.6L224.9 1212.8L224.0 1206.9L223.3 1201.0L222.8 1195.1L222.4 1189.2L222.2 1183.2L222.1 1177.2L222.2 1171.3L222.3 1165.3L222.6 1159.3L223.1 1153.4L223.6 1147.4L224.2 1141.5L224.9 1135.5L225.7 1129.6L226.7 1123.7L227.7 1117.8L228.8 1111.9L230.1 1106.1L231.5 1100.3L233.0 1094.5L234.6 1088.8L236.4 1083.1L238.3 1077.5L240.4 1071.9L242.7 1066.4L245.1 1061.0L247.6 1055.6L250.4 1050.4L253.2 1045.2L256.2 1040.0L259.3 1035.0L262.5 1030.0L265.8 1025.0L269.1 1020.0L272.5 1015.1L275.9 1010.2L279.3 1005.3L282.7 1000.4L286.2 995.5L289.7 990.7L293.3 985.9L296.9 981.1L300.6 976.4L304.4 971.7L308.2 967.1L312.0 962.5L316.0 958.0L320.0 953.6L324.0 949.2L328.2 944.9L332.4 940.6L336.6 936.4L340.9 932.2L345.3 928.1L349.6 924.0L354.0 919.9L358.4 915.8L362.7 911.7L367.1 907.5L371.5 903.4L375.8 899.3L380.1 895.1L384.4 890.9L388.7 886.8L393.0 882.6L397.3 878.4L401.7 874.3L406.0 870.2L410.4 866.1L414.9 862.1L419.3 858.1L423.8 854.1L428.4 850.2L433.0 846.3L437.6 842.5L442.2 838.7L446.9 835.0L451.6 831.3L456.3 827.6L461.1 823.9L465.8 820.2L470.6 816.6L475.4 812.9L480.1 809.3L484.9 805.7L489.7 802.1L494.5 798.4L499.3 794.8L504.1 791.3L508.9 787.7L513.8 784.1L518.6 780.6L523.5 777.1L528.3 773.6L533.2 770.1L538.2 766.7L543.1 763.3L548.1 760.0L553.1 756.6L558.1 753.4L563.1 750.1L568.2 746.9L573.3 743.8L578.4 740.6L583.6 737.5L588.7 734.5L593.9 731.5L599.1 728.5L604.3 725.5L609.5 722.6L614.8 719.7L620.1 716.8L625.3 713.9L630.6 711.1L635.9 708.3L641.2 705.5L646.6 702.8L651.9 700.0L657.3 697.3L662.6 694.6L668.0 692.0L673.4 689.4L678.8 686.8L684.2 684.2L689.6 681.6L695.1 679.1L700.5 676.6L706.0 674.1L711.5 671.6L716.9 669.2L722.4 666.8L727.9 664.4L733.4 662.0L739.0 659.6L744.5 657.3L750.0 655.0L755.6 652.7L761.1 650.5L766.7 648.2L772.3 646.0L777.9 643.8L783.4 641.7L789.0 639.5L794.7 637.4L800.3 635.3L805.9 633.2L811.5 631.2L817.2 629.1L822.8 627.1L828.5 625.1L834.2 623.2L839.8 621.2L845.5 619.3L851.2 617.4L856.9 615.6L862.6 613.7L868.4 611.9L874.1 610.2L879.8 608.4L885.6 606.7L891.3 605.0L897.1 603.3L902.9 601.7L908.7 600.1L914.4 598.6L920.3 597.1L926.1 595.6L931.9 594.2L937.7 592.9L943.6 591.6L949.5 590.4L955.3 589.2L961.2 588.1L967.1 587.1L973.0 586.1L978.9 585.1L984.9 584.1L990.8 583.2L996.7 582.3L1002.7 581.4L1008.6 580.5L1014.5 579.7L1020.5 578.9L1026.4 578.1L1032.4 577.3L1038.3 576.6L1044.3 575.9L1050.2 575.2L1056.2 574.5L1062.2 573.9L1068.1 573.3L1074.1 572.7L1080.1 572.1L1086.1 571.6L1092.0 571.1L1098.0 570.6L1104.0 570.1L1110.0 569.7L1116.0 569.2L1121.9 568.8L1127.9 568.4L1133.9 568.0L1139.9 567.6L1145.9 567.3L1151.9 566.9L1157.9 566.6L1163.9 566.3L1169.9 566.0L1175.8 565.7L1181.8 565.4L1187.8 565.1L1193.8 564.8L1199.8 564.6L1205.8 564.3L1211.8 564.1L1217.8 563.9L1223.8 563.6L1229.8 563.4L1235.8 563.2L1241.8 563.0L1247.8 562.8L1253.8 562.6L1259.8 562.4L1265.8 562.3L1271.8 562.1L1277.8 561.9L1283.8 561.8L1289.8 561.6L1295.8 561.5L1301.8 561.3L1307.8 561.2L1313.8 561.1L1319.8 560.9L1325.8 560.8L1331.8 560.7L1337.8 560.6L1343.8 560.5L1349.7 560.4L1355.7 560.3L1361.7 560.2L1367.7 560.1L1373.7 560.0L1379.6 560.0L1385.6 559.9L1391.5 559.8L1397.3 559.7L1403.2 559.7L1408.9 559.7L1414.7 559.6L1420.4 559.6L1426.0 559.7Z"/></clipPath>
<linearGradient id="deck" gradientUnits="userSpaceOnUse" x1="220" y1="0" x2="2640" y2="0"><stop offset="0" stop-color="#b4b5b7"/><stop offset="0.06" stop-color="#a9aaac"/><stop offset="0.14" stop-color="#9d9ea0"/><stop offset="0.23" stop-color="#959698"/><stop offset="0.34" stop-color="#8f9092"/><stop offset="0.5" stop-color="#8c8d8f"/><stop offset="0.7" stop-color="#88898b"/><stop offset="1" stop-color="#858687"/></linearGradient>
<filter id="b40" x="-20%" y="-20%" width="140%" height="140%"><feGaussianBlur stdDeviation="40"/></filter>
<filter id="b30" x="-20%" y="-20%" width="140%" height="140%"><feGaussianBlur stdDeviation="30"/></filter>
<filter id="b10" x="-20%" y="-20%" width="140%" height="140%"><feGaussianBlur stdDeviation="10"/></filter>
<filter id="b13" x="-20%" y="-20%" width="140%" height="140%"><feGaussianBlur stdDeviation="13"/></filter>
<filter id="b4" x="-20%" y="-20%" width="140%" height="140%"><feGaussianBlur stdDeviation="4"/></filter>
<filter id="b5" x="-20%" y="-20%" width="140%" height="140%"><feGaussianBlur stdDeviation="5"/></filter>
<filter id="b6" x="-20%" y="-20%" width="140%" height="140%"><feGaussianBlur stdDeviation="6"/></filter>
<filter id="b9" x="-20%" y="-20%" width="140%" height="140%"><feGaussianBlur stdDeviation="9"/></filter>
<filter id="b25" x="-20%" y="-20%" width="140%" height="140%"><feGaussianBlur stdDeviation="25"/></filter>
<filter id="b14" x="-20%" y="-20%" width="140%" height="140%"><feGaussianBlur stdDeviation="14"/></filter>
<filter id="b8" x="-20%" y="-20%" width="140%" height="140%"><feGaussianBlur stdDeviation="8"/></filter>
<filter id="b3" x="-20%" y="-20%" width="140%" height="140%"><feGaussianBlur stdDeviation="3"/></filter>
<filter id="b1"><feGaussianBlur stdDeviation="0.8"/></filter>
<linearGradient id="str" x1="0" y1="0" x2="1" y2="0"><stop offset="0" stop-color="#3a1d06"/><stop offset="0.5" stop-color="#4d2c0c"/><stop offset="1" stop-color="#3f2208"/></linearGradient>
<linearGradient id="strv" gradientUnits="userSpaceOnUse" x1="0" y1="560" x2="0" y2="1341"><stop offset="0" stop-color="#3a1d03"/><stop offset="0.55" stop-color="#3d2004"/><stop offset="0.72" stop-color="#4a2a08"/><stop offset="0.80" stop-color="#5a3a10"/><stop offset="0.86" stop-color="#6f4c1a"/><stop offset="0.888" stop-color="#73501d"/><stop offset="0.893" stop-color="#432708"/><stop offset="1" stop-color="#5a380e"/></linearGradient>
<linearGradient id="botg" gradientUnits="userSpaceOnUse" x1="0" y1="1254" x2="0" y2="1340"><stop offset="0" stop-color="#8d8e90"/><stop offset="0.5" stop-color="#97989a"/><stop offset="0.9" stop-color="#9c9d9f"/><stop offset="1" stop-color="#c8c8c9"/></linearGradient>
</defs>
<g clip-path="url(#sil)">
<rect x="200" y="540" width="2460" height="820" fill="url(#deck)"/>
<linearGradient id="p2g" gradientUnits="userSpaceOnUse" x1="0" y1="700" x2="0" y2="1130"><stop offset="0" stop-color="#fff" stop-opacity="0.10"/><stop offset="0.4" stop-color="#fff" stop-opacity="0.17"/><stop offset="0.8" stop-color="#fff" stop-opacity="0.22"/><stop offset="1" stop-color="#fff" stop-opacity="0"/></linearGradient>
<path d="M575.0 745.0C567.8 763.5 520.2 781.5 497.0 801.0C473.8 820.5 452.8 844.5 436.0 862.0C419.2 879.5 409.3 892.5 396.0 906.0C382.7 919.5 367.0 932.0 356.0 943.0C345.0 954.0 336.3 964.2 330.0 972.0C323.7 979.8 320.7 983.3 318.0 990.0C315.3 996.7 314.3 1005.0 314.0 1012.0C313.7 1019.0 314.0 1024.3 316.0 1032.0C318.0 1039.7 321.3 1050.0 326.0 1058.0C330.7 1066.0 335.0 1072.0 344.0 1080.0C353.0 1088.0 374.0 1076.0 380.0 1106.0C386.0 1136.0 426.7 1234.3 380.0 1260.0C333.3 1285.7 153.3 1303.3 100.0 1260.0C46.7 1216.7 26.7 1080.0 60.0 1000.0C93.3 920.0 220.0 831.7 300.0 780.0C380.0 728.3 494.2 695.8 540.0 690.0C585.8 684.2 582.2 726.5 575.0 745.0Z" fill="url(#p2g)" filter="url(#b6)"/>
<path d="M316.0 1032.0C353.7 1036.3 321.3 1050.0 326.0 1058.0C330.7 1066.0 334.3 1072.0 344.0 1080.0C353.7 1088.0 366.7 1098.0 384.0 1106.0C401.3 1114.0 426.2 1122.0 448.0 1128.0C469.8 1134.0 490.2 1137.8 515.0 1142.0C539.8 1146.2 570.2 1150.0 597.0 1153.0C623.8 1156.0 646.8 1158.2 676.0 1160.0C705.2 1161.8 734.0 1162.2 772.0 1164.0C810.0 1165.8 866.0 1168.3 904.0 1171.0C942.0 1173.7 974.8 1177.0 1000.0 1180.0C1025.2 1183.0 1021.7 1187.3 1055.0 1189.0C1088.3 1190.7 1138.5 1189.5 1200.0 1190.0C1261.5 1190.5 1386.7 1153.7 1424.0 1192.0C1461.3 1230.3 1644.7 1382.0 1424.0 1420.0C1203.3 1458.0 320.7 1484.7 100.0 1420.0C-120.7 1355.3 64.0 1096.7 100.0 1032.0C136.0 967.3 278.3 1027.7 316.0 1032.0Z" fill="#ffffff" opacity="0.16" filter="url(#b5)"/>
<linearGradient id="p1g" gradientUnits="userSpaceOnUse" x1="220" y1="0" x2="1120" y2="0"><stop offset="0" stop-color="#fff" stop-opacity="0.46"/><stop offset="0.13" stop-color="#fff" stop-opacity="0.58"/><stop offset="0.32" stop-color="#fff" stop-opacity="0.68"/><stop offset="1" stop-color="#fff" stop-opacity="0.8"/></linearGradient>
<path d="M120.0 1140.0C141.7 1086.7 215.0 1101.7 250.0 1100.0C285.0 1098.3 301.7 1118.7 330.0 1130.0C358.3 1141.3 381.7 1157.7 420.0 1168.0C458.3 1178.3 503.3 1186.2 560.0 1192.0C616.7 1197.8 693.3 1199.0 760.0 1203.0C826.7 1207.0 900.0 1212.8 960.0 1216.0C1020.0 1219.2 1093.3 1188.0 1120.0 1222.0C1146.7 1256.0 1286.7 1387.0 1120.0 1420.0C953.3 1453.0 286.7 1466.7 120.0 1420.0C-46.7 1373.3 98.3 1193.3 120.0 1140.0Z" fill="url(#p1g)" filter="url(#b30)"/>
<path d="M150.0 1258.0C175.0 1227.7 241.7 1240.0 300.0 1238.0C358.3 1236.0 433.3 1240.3 500.0 1246.0C566.7 1251.7 666.7 1243.0 700.0 1272.0C733.3 1301.0 791.7 1395.3 700.0 1420.0C608.3 1444.7 241.7 1447.0 150.0 1420.0C58.3 1393.0 125.0 1288.3 150.0 1258.0Z" fill="#ffffff" opacity="0.3" filter="url(#b25)"/>
<path d="M620.0 1262.0C660.0 1233.7 743.3 1253.7 800.0 1250.0C856.7 1246.3 920.0 1242.0 960.0 1240.0C1000.0 1238.0 1026.7 1208.0 1040.0 1238.0C1053.3 1268.0 1120.0 1389.7 1040.0 1420.0C960.0 1450.3 630.0 1446.3 560.0 1420.0C490.0 1393.7 580.0 1290.3 620.0 1262.0Z" fill="#ffffff" opacity="0.45" filter="url(#b25)"/>
<clipPath id="cL"><rect x="100" y="500" width="1328" height="900"/></clipPath><clipPath id="cR"><rect x="1428" y="500" width="1400" height="900"/></clipPath>
<g clip-path="url(#cL)"><path d="M925.0 1240.0C937.5 1223.2 970.8 1223.8 1000.0 1219.0C1029.2 1214.2 1066.7 1212.5 1100.0 1211.0C1133.3 1209.5 1166.7 1209.2 1200.0 1210.0C1233.3 1210.8 1266.7 1213.7 1300.0 1216.0C1333.3 1218.3 1371.7 1222.0 1400.0 1224.0C1428.3 1226.0 1458.3 1212.0 1470.0 1228.0C1481.7 1244.0 1560.8 1304.7 1470.0 1320.0C1379.2 1335.3 1015.8 1333.3 925.0 1320.0C834.2 1306.7 912.5 1256.8 925.0 1240.0Z" fill="#ffffff" opacity="1" filter="url(#b9)"/></g>
<g clip-path="url(#cR)"><path d="M1380.0 1213.0C1433.3 1195.2 1632.5 1210.7 1700.0 1213.0C1767.5 1215.3 1762.3 1218.8 1785.0 1227.0C1807.7 1235.2 1827.5 1246.5 1836.0 1262.0C1844.5 1277.5 1912.0 1310.3 1836.0 1320.0C1760.0 1329.7 1456.0 1337.8 1380.0 1320.0C1304.0 1302.2 1326.7 1230.8 1380.0 1213.0Z" fill="#ffffff" opacity="0.43" filter="url(#b13)"/></g>
<path d="M540.0 1328.0L547.7 1327.5L558.0 1326.8L570.2 1326.0L583.8 1325.0L598.2 1324.0L612.7 1323.0L626.9 1322.0L640.0 1321.0L652.4 1320.1L664.8 1319.2L677.2 1318.3L689.6 1317.4L701.9 1316.4L714.3 1315.3L726.6 1314.0L739.0 1312.5L751.6 1310.8L764.5 1308.8L777.6 1306.7L790.5 1304.4L803.3 1302.1L815.5 1299.8L827.2 1297.6L838.0 1295.5L848.0 1293.5L857.3 1291.4L866.1 1289.4L874.3 1287.4L882.2 1285.4L889.8 1283.6L897.2 1281.7L904.5 1280.0L911.5 1278.3L918.1 1276.7L924.3 1275.1L930.3 1273.6L936.2 1272.2L942.0 1270.9L947.9 1269.7L954.0 1268.6L959.9 1267.7L965.2 1266.9L970.4 1266.2L975.7 1265.6L981.4 1265.1L987.7 1264.6L995.0 1264.1L1003.6 1263.6L1013.6 1263.1L1025.0 1262.5L1037.3 1262.0L1050.2 1261.5L1063.6 1261.0L1077.0 1260.6L1090.2 1260.1L1102.8 1259.7L1114.2 1259.3L1124.4 1259.0L1134.1 1258.6L1144.0 1258.3L1154.9 1258.0L1167.3 1257.7L1182.1 1257.4L1200.0 1257.0L1222.7 1256.6L1250.4 1256.1L1281.1 1255.7L1313.1 1255.2L1344.6 1254.7L1373.6 1254.3L1398.3 1254.0L1417.0 1253.7L1427.7 1253.5L1431.3 1253.4L1430.3 1253.3L1427.1 1253.3L1424.0 1253.3L1423.5 1253.4L1428.1 1253.5L1440.0 1253.7L1460.8 1254.0L1488.7 1254.3L1521.6 1254.7L1557.0 1255.2L1592.9 1255.6L1626.8 1256.1L1656.6 1256.6L1680.0 1257.0L1696.7 1257.4L1708.9 1257.8L1717.6 1258.1L1724.1 1258.5L1729.5 1258.8L1734.9 1259.2L1741.6 1259.6L1750.6 1260.0L1761.8 1260.4L1773.9 1260.7L1786.6 1261.1L1799.7 1261.5L1812.9 1261.9L1825.8 1262.3L1838.3 1262.9L1850.0 1263.6L1860.8 1264.3L1870.9 1265.1L1880.5 1265.9L1890.0 1266.8L1899.4 1267.8L1909.0 1269.0L1919.2 1270.4L1930.0 1272.0L1941.5 1274.0L1953.6 1276.2L1966.0 1278.7L1978.8 1281.3L1991.6 1284.1L2004.5 1286.8L2017.4 1289.5L2030.0 1292.0L2042.6 1294.5L2055.2 1297.0L2067.9 1299.6L2080.6 1302.1L2093.2 1304.6L2105.7 1306.9L2118.0 1309.1L2130.0 1311.0L2141.7 1312.7L2153.0 1314.3L2164.0 1315.7L2175.0 1316.9L2186.0 1318.1L2197.0 1319.1L2208.3 1320.1L2220.0 1321.0L2232.7 1321.8L2246.6 1322.5L2261.2 1323.1L2275.6 1323.6L2289.4 1324.1L2301.8 1324.4L2312.2 1324.7L2320.0 1325.0L2400 1345L2400 1400L500 1400L500 1345Z" fill="url(#botg)" filter="url(#b5)"/>
<linearGradient id="mfade" gradientUnits="userSpaceOnUse" x1="900" y1="0" x2="1960" y2="0"><stop offset="0" stop-color="#000"/><stop offset="0.1" stop-color="#fff"/><stop offset="0.84" stop-color="#fff"/><stop offset="1" stop-color="#000"/></linearGradient>
<mask id="mbot" maskUnits="userSpaceOnUse" x="800" y="1200" width="1300" height="200"><rect x="800" y="1200" width="1300" height="200" fill="url(#mfade)"/></mask>
<path d="M540.0 1328.0L547.7 1327.5L558.0 1326.8L570.2 1326.0L583.8 1325.0L598.2 1324.0L612.7 1323.0L626.9 1322.0L640.0 1321.0L652.4 1320.1L664.8 1319.2L677.2 1318.3L689.6 1317.4L701.9 1316.4L714.3 1315.3L726.6 1314.0L739.0 1312.5L751.6 1310.8L764.5 1308.8L777.6 1306.7L790.5 1304.4L803.3 1302.1L815.5 1299.8L827.2 1297.6L838.0 1295.5L848.0 1293.5L857.3 1291.4L866.1 1289.4L874.3 1287.4L882.2 1285.4L889.8 1283.6L897.2 1281.7L904.5 1280.0L911.5 1278.3L918.1 1276.7L924.3 1275.1L930.3 1273.6L936.2 1272.2L942.0 1270.9L947.9 1269.7L954.0 1268.6L959.9 1267.7L965.2 1266.9L970.4 1266.2L975.7 1265.6L981.4 1265.1L987.7 1264.6L995.0 1264.1L1003.6 1263.6L1013.6 1263.1L1025.0 1262.5L1037.3 1262.0L1050.2 1261.5L1063.6 1261.0L1077.0 1260.6L1090.2 1260.1L1102.8 1259.7L1114.2 1259.3L1124.4 1259.0L1134.1 1258.6L1144.0 1258.3L1154.9 1258.0L1167.3 1257.7L1182.1 1257.4L1200.0 1257.0L1222.7 1256.6L1250.4 1256.1L1281.1 1255.7L1313.1 1255.2L1344.6 1254.7L1373.6 1254.3L1398.3 1254.0L1417.0 1253.7L1427.7 1253.5L1431.3 1253.4L1430.3 1253.3L1427.1 1253.3L1424.0 1253.3L1423.5 1253.4L1428.1 1253.5L1440.0 1253.7L1460.8 1254.0L1488.7 1254.3L1521.6 1254.7L1557.0 1255.2L1592.9 1255.6L1626.8 1256.1L1656.6 1256.6L1680.0 1257.0L1696.7 1257.4L1708.9 1257.8L1717.6 1258.1L1724.1 1258.5L1729.5 1258.8L1734.9 1259.2L1741.6 1259.6L1750.6 1260.0L1761.8 1260.4L1773.9 1260.7L1786.6 1261.1L1799.7 1261.5L1812.9 1261.9L1825.8 1262.3L1838.3 1262.9L1850.0 1263.6L1860.8 1264.3L1870.9 1265.1L1880.5 1265.9L1890.0 1266.8L1899.4 1267.8L1909.0 1269.0L1919.2 1270.4L1930.0 1272.0L1941.5 1274.0L1953.6 1276.2L1966.0 1278.7L1978.8 1281.3L1991.6 1284.1L2004.5 1286.8L2017.4 1289.5L2030.0 1292.0L2042.6 1294.5L2055.2 1297.0L2067.9 1299.6L2080.6 1302.1L2093.2 1304.6L2105.7 1306.9L2118.0 1309.1L2130.0 1311.0L2141.7 1312.7L2153.0 1314.3L2164.0 1315.7L2175.0 1316.9L2186.0 1318.1L2197.0 1319.1L2208.3 1320.1L2220.0 1321.0L2232.7 1321.8L2246.6 1322.5L2261.2 1323.1L2275.6 1323.6L2289.4 1324.1L2301.8 1324.4L2312.2 1324.7L2320.0 1325.0L2400 1345L2400 1400L500 1400L500 1345Z" fill="url(#botg)" mask="url(#mbot)"/>
<path d="M1800 1262 L1960 1275 L2240 1322 L2330 1326" fill="none" stroke="#87888a" stroke-width="10" filter="url(#b8)" opacity="0.9"/>
<path d="M1078.1 1182.4L1073.2 1181.6L1068.3 1180.7L1063.3 1179.9L1058.4 1179.1L1053.5 1178.4L1048.6 1177.6L1043.7 1176.9L1038.8 1176.2L1033.8 1175.4L1028.9 1174.7L1024.0 1174.0L1019.0 1173.3L1014.1 1172.7L1009.1 1172.0L1004.1 1171.3L999.2 1170.6L994.2 1169.9L989.3 1169.3L984.3 1168.6L979.3 1168.0L974.3 1167.4L969.4 1166.8L964.4 1166.2L959.4 1165.6L954.4 1165.0L949.5 1164.5L944.5 1163.9L939.5 1163.4L934.5 1163.0L929.5 1162.5L924.5 1162.1L919.5 1161.7L914.5 1161.3L909.5 1160.9L904.5 1160.6L899.4 1160.3L894.4 1160.0L889.4 1159.7L884.4 1159.4L879.4 1159.1L874.4 1158.8L869.4 1158.6L864.4 1158.3L859.4 1158.1L854.4 1157.9L849.4 1157.6L844.5 1157.4L839.5 1157.2L834.5 1156.9L829.5 1156.7L824.5 1156.5L819.5 1156.3L814.5 1156.1L809.5 1155.9L804.5 1155.6L799.5 1155.4L794.5 1155.2L789.5 1155.0L784.5 1154.8L779.5 1154.6L774.5 1154.4L769.5 1154.2L764.5 1154.0L759.5 1153.8L754.5 1153.6L749.5 1153.4L744.5 1153.2L739.5 1153.1L734.5 1152.9L729.5 1152.7L724.5 1152.6L719.5 1152.4L714.5 1152.2L709.5 1152.0L704.5 1151.8L699.6 1151.6L694.6 1151.4L689.6 1151.1L684.6 1150.8L679.7 1150.5L674.7 1150.2L669.7 1149.9L664.8 1149.5L659.8 1149.1L654.8 1148.7L649.9 1148.3L644.9 1147.8L640.0 1147.3L635.0 1146.8L630.0 1146.3L625.1 1145.8L620.1 1145.2L615.2 1144.7L610.2 1144.1L605.3 1143.5L600.3 1142.9L595.4 1142.3L590.4 1141.7L585.5 1141.1L580.5 1140.4L575.6 1139.8L570.6 1139.1L565.7 1138.4L560.8 1137.7L555.8 1137.0L550.9 1136.3L546.0 1135.5L541.1 1134.8L536.2 1134.0L531.3 1133.1L526.4 1132.3L521.5 1131.4L516.6 1130.5L511.7 1129.5L506.9 1128.5L502.0 1127.5L497.2 1126.4L492.4 1125.3L487.5 1124.2L482.7 1123.0L477.9 1121.7L473.2 1120.5L468.4 1119.2L463.6 1117.8L458.9 1116.4L454.1 1115.0L449.4 1113.6L444.7 1112.1L439.9 1110.6L435.3 1109.1L430.6 1107.5L425.9 1105.8L421.3 1104.2L416.7 1102.4L412.2 1100.6L407.8 1098.8L403.4 1096.8L399.0 1094.7L394.8 1092.6L390.6 1090.3L386.5 1087.9L382.6 1085.3L378.6 1082.7L374.8 1079.9L371.1 1077.0L367.4 1074.0L363.9 1070.9L360.5 1067.7L357.2 1064.4L354.2 1061.1L351.3 1057.6L348.7 1054.1L346.3 1050.5L344.2 1046.7L342.3 1042.9L340.6 1039.0L339.2 1035.1L338.0 1031.1L337.0 1027.0L336.3 1022.9L335.9 1018.8L335.7 1014.6L335.8 1010.4L336.1 1006.1L336.6 1001.8L337.4 997.4L338.5 993.0L339.7 988.6L341.2 984.1L342.8 979.7L344.5 975.4L346.4 971.0L348.5 966.8L350.6 962.6L352.9 958.5L355.4 954.5L357.9 950.5L360.7 946.6L363.5 942.7L366.4 938.8L369.4 935.0L372.5 931.1L375.7 927.4L378.9 923.6L382.1 919.9L385.4 916.2L388.7 912.6L392.2 909.0L395.6 905.4L399.1 901.9L402.6 898.5L406.2 895.0L409.8 891.6L413.4 888.1L417.1 884.7L420.7 881.3L424.4 877.9L428.0 874.4L431.6 871.0L435.2 867.5L438.8 864.0L442.4 860.5L446.0 857.0L449.6 853.5L453.1 850.0L456.7 846.4L460.2 842.9L463.8 839.4L467.3 835.9L470.9 832.4L474.4 829.0L478.0 825.5L481.7 822.1L485.3 818.8L489.0 815.4L492.7 812.2L496.5 808.9L500.3 805.7L504.1 802.5L508.0 799.4L511.9 796.3L515.8 793.2L519.7 790.1L523.6 787.0L527.6 784.0L531.5 780.9L535.5 777.9L539.5 774.9L543.5 772.0L547.5 769.0L551.6 766.1L555.6 763.2L559.7 760.4L563.8 757.5L567.9 754.7L572.1 752.0L576.2 749.2L580.4 746.5L584.6 743.7L588.8 741.0L593.0 738.3L597.2 735.7L601.4 733.0L605.7 730.3L609.9 727.7L614.1 725.0L618.4 722.4L622.6 719.7L626.9 717.1L631.1 714.5L635.4 712.0L639.7 709.4L644.0 706.9L648.3 704.4L652.7 702.0L657.1 699.6L661.5 697.2L665.9 694.9L670.3 692.7L674.8 690.4L679.3 688.2L683.8 686.1L688.3 684.0L692.8 681.9L697.3 679.8L701.9 677.8L706.5 675.7L711.0 673.7L715.6 671.7L720.2 669.7L724.8 667.7L729.4 665.8L734.0 663.8L738.6 661.8L743.2 659.9L747.8 658.0L752.4 656.0L757.0 654.1L761.6 652.2L766.3 650.3L770.9 648.4L775.5 646.6L780.2 644.7L784.8 642.9L789.5 641.1L794.2 639.3L798.8 637.5L803.5 635.8L808.2 634.1L812.9 632.3L817.6 630.6L822.3 628.9L827.0 627.3L831.7 625.6L836.4 623.9L841.1 622.3L845.8 620.6L850.5 619.0L855.2 617.3L859.8 615.7L864.5 614.1L869.1 612.4L868.9 611.6L864.2 613.2L859.5 614.8L854.8 616.4L850.1 618.0L845.4 619.6L840.7 621.2L836.0 622.9L831.3 624.5L826.6 626.1L821.9 627.8L817.2 629.5L812.4 631.1L807.7 632.8L803.0 634.6L798.3 636.3L793.7 638.0L789.0 639.8L784.3 641.6L779.6 643.4L775.0 645.2L770.3 647.0L765.7 648.9L761.0 650.7L756.4 652.6L751.8 654.5L747.1 656.4L742.5 658.3L737.9 660.2L733.3 662.1L728.7 664.1L724.0 666.0L719.4 667.9L714.8 669.9L710.2 671.9L705.6 673.9L701.1 675.8L696.5 677.9L691.9 679.9L687.3 681.9L682.8 684.0L678.2 686.1L673.7 688.3L669.2 690.5L664.7 692.7L660.3 695.0L655.8 697.3L651.4 699.6L647.0 702.0L642.6 704.5L638.3 706.9L633.9 709.4L629.6 712.0L625.3 714.5L621.0 717.1L616.7 719.6L612.4 722.2L608.1 724.8L603.9 727.4L599.6 730.0L595.3 732.6L591.0 735.2L586.8 737.9L582.5 740.5L578.3 743.2L574.1 745.8L569.8 748.5L565.6 751.2L561.4 754.0L557.2 756.8L553.1 759.6L548.9 762.4L544.8 765.2L540.7 768.1L536.6 771.0L532.6 774.0L528.5 776.9L524.5 779.9L520.5 782.9L516.5 785.9L512.5 788.9L508.5 791.9L504.5 795.0L500.5 798.1L496.6 801.2L492.6 804.3L488.7 807.5L484.9 810.7L481.0 813.9L477.2 817.2L473.5 820.5L469.7 823.9L466.0 827.3L462.3 830.7L458.7 834.1L455.0 837.5L451.3 840.9L447.7 844.4L444.1 847.8L440.4 851.2L436.8 854.6L433.1 858.0L429.5 861.4L425.8 864.8L422.1 868.2L418.5 871.5L414.8 874.9L411.1 878.3L407.4 881.7L403.7 885.1L400.1 888.5L396.4 892.0L392.8 895.4L389.1 898.9L385.5 902.5L382.0 906.0L378.4 909.7L374.9 913.3L371.5 917.0L368.1 920.7L364.7 924.4L361.3 928.1L358.0 931.9L354.7 935.7L351.4 939.5L348.2 943.4L345.1 947.4L342.1 951.5L339.2 955.7L336.4 960.0L333.8 964.4L331.2 968.9L328.8 973.5L326.5 978.2L324.4 983.0L322.4 987.9L320.7 992.9L319.2 998.1L318.0 1003.3L317.1 1008.7L316.7 1014.2L316.6 1019.7L317.0 1025.2L317.8 1030.7L319.0 1036.1L320.6 1041.4L322.6 1046.5L325.0 1051.5L327.7 1056.2L330.7 1060.8L333.9 1065.2L337.4 1069.3L341.0 1073.2L344.8 1077.0L348.8 1080.5L352.8 1083.9L356.9 1087.1L361.1 1090.2L365.4 1093.1L369.8 1096.0L374.2 1098.7L378.8 1101.3L383.3 1103.7L388.0 1106.0L392.7 1108.2L397.4 1110.3L402.2 1112.2L407.0 1114.0L411.8 1115.8L416.6 1117.4L421.5 1119.0L426.3 1120.6L431.1 1122.0L436.0 1123.5L440.8 1124.9L445.7 1126.2L450.5 1127.6L455.4 1128.9L460.3 1130.1L465.2 1131.3L470.1 1132.5L475.0 1133.7L480.0 1134.8L484.9 1135.8L489.8 1136.8L494.8 1137.8L499.7 1138.8L504.7 1139.7L509.6 1140.6L514.6 1141.4L519.6 1142.3L524.5 1143.1L529.5 1143.9L534.5 1144.6L539.5 1145.3L544.4 1146.1L549.4 1146.8L554.4 1147.4L559.4 1148.1L564.3 1148.7L569.3 1149.3L574.3 1149.9L579.3 1150.5L584.2 1151.1L589.2 1151.7L594.2 1152.3L599.2 1152.8L604.2 1153.3L609.1 1153.9L614.1 1154.4L619.1 1154.9L624.1 1155.4L629.1 1155.8L634.1 1156.3L639.1 1156.7L644.1 1157.2L649.1 1157.6L654.1 1157.9L659.1 1158.3L664.1 1158.6L669.1 1159.0L674.1 1159.3L679.1 1159.5L684.2 1159.8L689.2 1160.0L694.2 1160.3L699.2 1160.5L704.2 1160.7L709.2 1160.8L714.2 1161.0L719.2 1161.1L724.2 1161.3L729.2 1161.4L734.2 1161.6L739.2 1161.7L744.2 1161.9L749.2 1162.0L754.2 1162.2L759.2 1162.3L764.2 1162.5L769.2 1162.7L774.2 1162.9L779.2 1163.0L784.2 1163.2L789.1 1163.4L794.1 1163.6L799.1 1163.8L804.1 1164.0L809.1 1164.2L814.1 1164.4L819.1 1164.6L824.1 1164.8L829.1 1165.0L834.1 1165.2L839.1 1165.4L844.1 1165.6L849.1 1165.8L854.1 1166.1L859.1 1166.3L864.1 1166.5L869.0 1166.7L874.0 1167.0L879.0 1167.2L884.0 1167.5L889.0 1167.7L894.0 1168.0L898.9 1168.3L903.9 1168.6L908.9 1169.0L913.9 1169.3L918.8 1169.7L923.8 1170.1L928.7 1170.5L933.7 1171.0L938.7 1171.5L943.6 1172.0L948.6 1172.6L953.5 1173.1L958.5 1173.7L963.4 1174.3L968.4 1174.9L973.3 1175.6L978.3 1176.2L983.2 1176.9L988.1 1177.6L993.1 1178.3L998.0 1179.0L1003.0 1179.7L1007.9 1180.4L1012.9 1181.1L1017.8 1181.8L1022.8 1182.5L1027.7 1183.2L1032.7 1183.9L1037.7 1184.5L1042.7 1185.0L1047.7 1185.4L1052.7 1185.8L1057.8 1186.0L1062.8 1186.1L1067.8 1186.1L1072.8 1186.1L1077.9 1186.0Z" fill="#a8231d"/>
<path d="M1424.0 1184.3L1417.0 1184.2L1408.3 1184.2L1398.2 1184.1L1386.9 1184.0L1374.3 1183.9L1360.8 1183.8L1346.5 1183.7L1331.5 1183.5L1315.9 1183.4L1300.0 1183.2L1282.5 1183.0L1262.7 1182.7L1241.1 1182.4L1218.6 1182.0L1195.9 1181.7L1173.5 1181.4L1152.4 1181.1L1133.0 1180.8L1116.3 1180.6L1102.8 1180.5L1092.7 1180.5L1085.2 1180.5L1079.8 1180.6L1076.3 1180.7L1074.0 1180.9L1072.6 1181.1L1071.6 1181.3L1071.0 1181.4L1069.9 1181.5L1067.9 1181.6L1065.4 1181.6L1063.0 1181.6L1060.7 1181.6L1058.7 1181.6L1056.8 1181.6L1055.1 1181.6L1053.5 1181.6L1052.1 1181.6L1051.0 1181.5L1050.0 1181.5L1050.0 1186.5L1051.0 1186.4L1052.2 1186.4L1053.6 1186.3L1055.1 1186.2L1056.9 1186.1L1058.8 1186.0L1060.8 1185.9L1063.1 1185.8L1065.5 1185.7L1068.1 1185.6L1070.2 1185.5L1071.6 1185.3L1072.5 1185.0L1073.3 1184.8L1074.4 1184.6L1076.5 1184.5L1079.9 1184.3L1085.2 1184.2L1092.7 1184.1L1102.8 1184.1L1116.3 1184.2L1133.0 1184.4L1152.3 1184.7L1173.5 1185.0L1195.8 1185.3L1218.6 1185.6L1241.1 1186.0L1262.6 1186.3L1282.5 1186.6L1300.0 1186.8L1315.9 1187.0L1331.4 1187.2L1346.5 1187.4L1360.8 1187.6L1374.3 1187.7L1386.8 1187.9L1398.2 1188.0L1408.3 1188.1L1416.9 1188.2L1424.0 1188.3Z" fill="#a8231d"/>
<path d="M1436.0 1188.3L1443.1 1188.2L1451.8 1188.0L1462.0 1187.8L1473.5 1187.6L1486.1 1187.4L1499.7 1187.1L1514.0 1186.9L1529.0 1186.6L1544.4 1186.4L1560.0 1186.1L1577.1 1185.8L1596.4 1185.5L1617.2 1185.1L1638.9 1184.7L1660.9 1184.4L1682.4 1184.0L1702.8 1183.7L1721.4 1183.4L1737.5 1183.2L1750.6 1183.1L1760.5 1183.1L1767.8 1183.2L1773.0 1183.4L1776.5 1183.7L1778.7 1183.9L1780.0 1184.2L1780.9 1184.5L1782.0 1184.8L1783.6 1185.0L1785.9 1185.2L1788.6 1185.4L1791.2 1185.5L1793.7 1185.6L1796.0 1185.7L1798.2 1185.8L1800.2 1185.8L1801.9 1185.9L1803.5 1186.0L1804.8 1186.0L1806.0 1186.1L1806.0 1181.1L1804.9 1181.1L1803.5 1181.2L1802.0 1181.2L1800.2 1181.2L1798.2 1181.3L1796.1 1181.3L1793.8 1181.3L1791.4 1181.3L1788.8 1181.3L1786.1 1181.2L1784.0 1181.1L1782.8 1180.9L1781.9 1180.7L1780.8 1180.4L1779.2 1180.2L1776.8 1179.9L1773.2 1179.7L1767.9 1179.6L1760.5 1179.5L1750.6 1179.5L1737.5 1179.6L1721.3 1179.8L1702.7 1180.1L1682.3 1180.4L1660.8 1180.8L1638.9 1181.1L1617.1 1181.5L1596.3 1181.9L1577.0 1182.2L1560.0 1182.5L1544.3 1182.7L1528.9 1183.0L1514.0 1183.2L1499.6 1183.4L1486.1 1183.6L1473.4 1183.8L1462.0 1183.9L1451.8 1184.1L1443.0 1184.2L1436.0 1184.3Z" fill="#8c1510"/>
<path d="M1776.1 1185.4L1781.1 1185.5L1786.2 1185.6L1791.2 1185.6L1796.2 1185.5L1801.3 1185.3L1806.3 1184.9L1811.3 1184.5L1816.4 1183.9L1821.3 1183.2L1826.3 1182.4L1831.3 1181.6L1836.2 1180.8L1841.1 1179.9L1846.0 1179.1L1851.0 1178.3L1855.9 1177.5L1860.8 1176.7L1865.7 1176.0L1870.6 1175.3L1875.5 1174.6L1880.5 1174.1L1885.4 1173.5L1890.3 1173.0L1895.3 1172.5L1900.2 1172.0L1905.2 1171.5L1910.2 1171.1L1915.2 1170.7L1920.1 1170.3L1925.1 1169.9L1930.1 1169.5L1935.1 1169.1L1940.0 1168.7L1945.0 1168.3L1950.0 1168.0L1955.0 1167.6L1960.0 1167.3L1965.0 1166.9L1969.9 1166.6L1974.9 1166.2L1979.9 1165.9L1984.9 1165.5L1989.9 1165.2L1994.9 1164.9L1999.9 1164.5L2004.8 1164.2L2009.8 1163.9L2014.8 1163.5L2019.8 1163.2L2024.8 1162.9L2029.8 1162.6L2034.8 1162.3L2039.8 1162.0L2044.7 1161.7L2049.7 1161.4L2054.7 1161.1L2059.7 1160.9L2064.7 1160.6L2069.7 1160.3L2074.7 1160.1L2079.7 1159.8L2084.6 1159.6L2089.6 1159.3L2094.6 1159.1L2099.6 1158.9L2104.6 1158.7L2109.6 1158.5L2114.6 1158.3L2119.6 1158.1L2124.5 1158.0L2129.5 1157.8L2134.5 1157.7L2139.5 1157.6L2144.5 1157.5L2149.5 1157.4L2154.5 1157.3L2159.5 1157.3L2164.5 1157.2L2169.5 1157.1L2174.5 1157.0L2179.5 1156.9L2184.5 1156.8L2189.5 1156.6L2194.6 1156.4L2199.6 1156.2L2204.6 1155.9L2209.6 1155.6L2214.7 1155.2L2219.7 1154.9L2224.7 1154.4L2229.7 1154.0L2234.7 1153.5L2239.7 1153.0L2244.7 1152.5L2249.6 1152.0L2254.6 1151.5L2259.6 1151.0L2264.6 1150.4L2269.5 1149.9L2274.5 1149.4L2279.5 1148.8L2284.5 1148.3L2289.5 1147.7L2294.4 1147.1L2299.4 1146.6L2304.4 1146.0L2309.4 1145.3L2314.4 1144.7L2319.3 1144.0L2324.3 1143.3L2329.3 1142.6L2334.3 1141.9L2339.2 1141.1L2344.2 1140.3L2349.2 1139.5L2354.1 1138.6L2359.1 1137.7L2364.0 1136.8L2369.0 1135.8L2373.9 1134.8L2378.9 1133.7L2383.8 1132.6L2388.7 1131.4L2393.6 1130.1L2398.5 1128.8L2403.4 1127.5L2408.3 1126.0L2413.1 1124.6L2417.9 1123.0L2422.7 1121.5L2427.5 1119.8L2432.3 1118.1L2437.1 1116.4L2441.8 1114.6L2446.6 1112.7L2451.3 1110.7L2455.9 1108.6L2460.6 1106.5L2465.2 1104.3L2469.8 1102.0L2474.3 1099.7L2478.8 1097.2L2483.2 1094.8L2487.6 1092.2L2492.0 1089.7L2496.4 1087.0L2500.7 1084.3L2505.1 1081.5L2509.3 1078.5L2513.6 1075.3L2517.7 1071.9L2521.6 1068.3L2525.3 1064.3L2528.7 1060.0L2531.8 1055.5L2534.5 1050.7L2536.8 1045.8L2538.8 1040.7L2540.4 1035.5L2541.7 1030.2L2542.6 1024.9L2543.2 1019.5L2543.4 1014.0L2543.2 1008.6L2542.6 1003.2L2541.7 997.8L2540.3 992.6L2538.6 987.5L2536.6 982.5L2534.4 977.7L2531.8 973.1L2529.1 968.6L2526.2 964.2L2523.2 960.0L2520.0 956.0L2516.8 952.0L2513.5 948.1L2510.1 944.3L2506.7 940.5L2503.2 936.8L2499.8 933.2L2496.3 929.5L2492.8 925.9L2489.2 922.4L2485.7 918.8L2482.2 915.2L2478.6 911.7L2475.1 908.1L2471.5 904.6L2468.0 901.1L2464.4 897.6L2460.9 894.0L2457.3 890.5L2453.8 887.0L2450.2 883.5L2446.7 880.0L2443.1 876.5L2439.6 872.9L2436.0 869.4L2432.5 865.9L2429.0 862.3L2425.5 858.7L2422.0 855.2L2418.5 851.6L2415.1 848.0L2411.6 844.4L2408.1 840.8L2404.6 837.2L2401.1 833.6L2397.6 830.1L2394.1 826.5L2390.6 822.9L2387.1 819.3L2383.6 815.8L2380.0 812.3L2376.4 808.7L2372.8 805.3L2369.2 801.8L2365.5 798.4L2361.7 795.0L2357.9 791.7L2354.1 788.5L2350.2 785.3L2346.2 782.2L2342.2 779.2L2338.1 776.2L2334.0 773.4L2329.8 770.5L2325.6 767.8L2321.4 765.1L2317.2 762.4L2312.9 759.7L2308.7 757.1L2304.4 754.4L2300.2 751.8L2296.0 749.2L2291.7 746.5L2287.5 743.9L2283.2 741.2L2279.0 738.6L2274.7 735.9L2270.5 733.3L2266.2 730.7L2262.0 728.0L2257.7 725.4L2253.4 722.8L2249.1 720.3L2244.8 717.7L2240.4 715.2L2236.1 712.8L2231.7 710.3L2227.3 707.9L2222.9 705.6L2218.4 703.3L2214.0 701.0L2209.5 698.8L2205.0 696.6L2200.4 694.5L2195.9 692.4L2191.3 690.3L2186.8 688.3L2182.2 686.2L2177.6 684.2L2173.0 682.3L2168.4 680.3L2163.8 678.3L2159.2 676.4L2154.6 674.4L2150.0 672.5L2145.4 670.5L2140.8 668.6L2136.2 666.6L2131.6 664.7L2126.9 662.8L2122.3 660.9L2117.7 659.0L2113.1 657.1L2108.5 655.2L2103.9 653.4L2099.3 651.5L2094.9 649.7L2090.5 647.9L2086.2 646.2L2082.1 644.5L2078.0 642.9L2074.1 641.4L2070.3 639.8L2069.7 641.2L2073.6 642.8L2077.5 644.4L2081.5 646.0L2085.6 647.7L2089.8 649.5L2094.2 651.3L2098.7 653.1L2103.2 655.0L2107.8 656.9L2112.4 658.8L2117.0 660.7L2121.6 662.6L2126.2 664.5L2130.8 666.5L2135.4 668.4L2140.0 670.4L2144.6 672.3L2149.2 674.3L2153.8 676.3L2158.4 678.2L2163.0 680.2L2167.6 682.2L2172.2 684.2L2176.7 686.2L2181.3 688.3L2185.9 690.3L2190.4 692.4L2194.9 694.5L2199.4 696.6L2203.9 698.8L2208.4 701.0L2212.9 703.2L2217.3 705.5L2221.7 707.9L2226.0 710.3L2230.4 712.7L2234.7 715.2L2239.0 717.7L2243.3 720.3L2247.5 722.9L2251.8 725.5L2256.0 728.1L2260.2 730.8L2264.4 733.5L2268.6 736.2L2272.8 738.9L2277.0 741.7L2281.2 744.4L2285.4 747.1L2289.6 749.8L2293.8 752.6L2298.0 755.3L2302.2 758.0L2306.4 760.7L2310.6 763.4L2314.8 766.1L2318.9 768.9L2323.1 771.7L2327.2 774.5L2331.2 777.3L2335.2 780.2L2339.2 783.2L2343.1 786.2L2346.9 789.3L2350.7 792.5L2354.5 795.7L2358.2 799.0L2361.8 802.4L2365.4 805.8L2369.0 809.3L2372.5 812.7L2376.0 816.3L2379.5 819.8L2383.0 823.4L2386.5 827.0L2390.0 830.5L2393.4 834.2L2396.9 837.8L2400.3 841.4L2403.8 845.0L2407.2 848.6L2410.7 852.2L2414.1 855.8L2417.6 859.5L2421.1 863.1L2424.5 866.7L2428.0 870.3L2431.5 873.9L2435.0 877.4L2438.5 881.0L2442.0 884.6L2445.5 888.1L2449.0 891.7L2452.6 895.3L2456.1 898.8L2459.6 902.4L2463.0 906.0L2466.5 909.6L2470.0 913.1L2473.5 916.7L2476.9 920.4L2480.3 924.0L2483.7 927.6L2487.1 931.3L2490.4 935.0L2493.6 938.7L2496.8 942.5L2499.9 946.3L2503.0 950.2L2505.9 954.1L2508.6 958.1L2511.3 962.2L2513.7 966.3L2516.0 970.4L2518.1 974.6L2519.9 978.9L2521.5 983.2L2522.7 987.5L2523.8 991.8L2524.5 996.1L2525.0 1000.4L2525.2 1004.8L2525.2 1009.1L2525.0 1013.4L2524.6 1017.7L2523.9 1022.0L2523.1 1026.3L2522.1 1030.5L2520.9 1034.7L2519.5 1038.8L2518.0 1042.7L2516.1 1046.4L2514.1 1050.0L2511.8 1053.4L2509.2 1056.7L2506.3 1059.9L2503.1 1063.0L2499.7 1066.0L2496.0 1068.9L2492.2 1071.7L2488.3 1074.5L2484.2 1077.3L2480.1 1079.9L2476.0 1082.6L2471.8 1085.1L2467.6 1087.6L2463.4 1090.0L2459.1 1092.3L2454.8 1094.6L2450.4 1096.8L2446.0 1098.9L2441.5 1100.9L2437.1 1102.8L2432.5 1104.7L2428.0 1106.5L2423.4 1108.2L2418.7 1109.9L2414.1 1111.6L2409.4 1113.2L2404.7 1114.7L2400.0 1116.2L2395.3 1117.6L2390.6 1119.0L2385.8 1120.3L2381.1 1121.6L2376.3 1122.8L2371.5 1124.0L2366.7 1125.1L2361.9 1126.2L2357.0 1127.2L2352.2 1128.2L2347.3 1129.1L2342.4 1130.0L2337.5 1130.9L2332.6 1131.8L2327.7 1132.6L2322.8 1133.4L2317.9 1134.2L2313.0 1135.0L2308.1 1135.7L2303.1 1136.4L2298.2 1137.1L2293.3 1137.7L2288.3 1138.4L2283.4 1139.0L2278.4 1139.6L2273.5 1140.3L2268.5 1140.9L2263.5 1141.5L2258.6 1142.1L2253.6 1142.7L2248.7 1143.3L2243.7 1143.9L2238.8 1144.5L2233.8 1145.0L2228.9 1145.6L2223.9 1146.1L2219.0 1146.6L2214.0 1147.0L2209.1 1147.4L2204.1 1147.8L2199.2 1148.1L2194.2 1148.4L2189.2 1148.6L2184.3 1148.8L2179.3 1148.9L2174.3 1149.0L2169.3 1149.1L2164.3 1149.2L2159.3 1149.3L2154.3 1149.3L2149.3 1149.4L2144.3 1149.5L2139.3 1149.6L2134.3 1149.7L2129.3 1149.8L2124.3 1150.0L2119.3 1150.1L2114.3 1150.3L2109.3 1150.5L2104.3 1150.7L2099.3 1150.9L2094.3 1151.1L2089.3 1151.4L2084.3 1151.6L2079.3 1151.8L2074.3 1152.1L2069.3 1152.3L2064.3 1152.6L2059.3 1152.9L2054.3 1153.2L2049.3 1153.4L2044.3 1153.7L2039.3 1154.0L2034.3 1154.3L2029.3 1154.6L2024.3 1154.9L2019.3 1155.2L2014.3 1155.6L2009.3 1155.9L2004.3 1156.2L1999.3 1156.5L1994.3 1156.8L1989.3 1157.2L1984.4 1157.5L1979.4 1157.8L1974.4 1158.2L1969.4 1158.5L1964.4 1158.9L1959.4 1159.2L1954.4 1159.6L1949.4 1159.9L1944.4 1160.3L1939.4 1160.6L1934.4 1161.0L1929.5 1161.4L1924.5 1161.8L1919.5 1162.2L1914.5 1162.6L1909.5 1163.0L1904.5 1163.4L1899.5 1163.8L1894.5 1164.3L1889.5 1164.8L1884.5 1165.3L1879.5 1165.9L1874.5 1166.4L1869.5 1167.1L1864.5 1167.7L1859.5 1168.4L1854.6 1169.1L1849.6 1169.9L1844.7 1170.7L1839.7 1171.5L1834.8 1172.3L1829.9 1173.2L1825.0 1174.0L1820.1 1174.8L1815.2 1175.6L1810.3 1176.4L1805.4 1177.1L1800.5 1177.9L1795.6 1178.7L1790.7 1179.4L1785.8 1180.2L1780.8 1181.0L1775.9 1181.8Z" fill="#7e120b"/>
<path d="M1420.0 1267.3L1413.2 1267.4L1404.9 1267.5L1395.2 1267.7L1384.3 1267.9L1372.3 1268.1L1359.3 1268.3L1345.4 1268.6L1330.8 1268.8L1315.6 1269.0L1300.0 1269.3L1282.7 1269.5L1263.0 1269.7L1241.6 1270.0L1219.2 1270.2L1196.6 1270.5L1174.2 1270.7L1153.0 1271.0L1133.6 1271.2L1116.6 1271.5L1102.8 1271.8L1092.1 1271.9L1084.0 1272.1L1078.0 1272.2L1073.6 1272.4L1070.5 1272.5L1068.2 1272.7L1066.3 1272.9L1064.6 1273.1L1062.6 1273.3L1059.7 1273.5L1056.9 1273.8L1054.8 1273.9L1053.2 1274.1L1051.8 1274.2L1050.5 1274.4L1048.9 1274.7L1046.8 1275.1L1043.9 1275.6L1039.9 1276.3L1034.5 1277.3L1027.7 1278.6L1019.7 1280.1L1010.6 1281.8L1000.8 1283.7L990.4 1285.7L979.6 1287.8L968.7 1289.8L957.8 1291.9L947.2 1293.8L937.1 1295.5L927.2 1297.2L917.3 1298.9L907.4 1300.6L897.5 1302.2L887.5 1303.8L877.5 1305.4L867.6 1306.9L857.6 1308.4L847.7 1309.7L837.8 1311.0L827.9 1312.2L818.0 1313.4L808.1 1314.4L798.2 1315.4L788.3 1316.4L778.4 1317.3L768.6 1318.1L758.7 1319.0L748.8 1319.7L738.9 1320.5L728.9 1321.2L718.8 1321.9L708.6 1322.6L698.4 1323.2L688.3 1323.8L678.2 1324.3L668.3 1324.8L658.5 1325.2L649.1 1325.6L640.0 1326.0L630.8 1326.3L621.5 1326.5L612.1 1326.7L602.8 1326.8L593.8 1326.9L585.3 1327.0L577.5 1327.1L570.6 1327.1L564.7 1327.2L560.0 1327.3L560.0 1328.7L564.7 1328.7L570.6 1328.7L577.5 1328.7L585.3 1328.7L593.8 1328.7L602.8 1328.6L612.1 1328.6L621.5 1328.4L630.9 1328.2L640.0 1328.0L649.2 1327.7L658.6 1327.4L668.4 1327.1L678.3 1326.7L688.4 1326.2L698.6 1325.8L708.8 1325.3L719.0 1324.7L729.1 1324.1L739.1 1323.5L749.0 1322.8L758.9 1322.1L768.8 1321.4L778.7 1320.7L788.6 1319.9L798.5 1319.0L808.4 1318.1L818.4 1317.1L828.3 1316.1L838.2 1315.0L848.2 1313.8L858.2 1312.5L868.2 1311.2L878.2 1309.8L888.2 1308.3L898.2 1306.8L908.2 1305.2L918.1 1303.7L928.0 1302.1L937.9 1300.5L948.1 1298.7L958.7 1296.9L969.6 1294.9L980.6 1292.9L991.4 1290.9L1001.8 1288.9L1011.6 1287.1L1020.7 1285.4L1028.7 1283.9L1035.5 1282.7L1040.8 1281.7L1044.9 1280.9L1047.8 1280.4L1049.9 1279.9L1051.4 1279.6L1052.6 1279.4L1053.8 1279.2L1055.3 1279.0L1057.3 1278.8L1060.3 1278.5L1063.2 1278.1L1065.3 1277.7L1067.0 1277.4L1068.7 1277.1L1070.8 1276.8L1073.8 1276.5L1078.1 1276.2L1084.1 1275.9L1092.2 1275.6L1102.8 1275.2L1116.6 1275.0L1133.6 1274.7L1153.1 1274.5L1174.3 1274.2L1196.6 1274.0L1219.3 1273.7L1241.7 1273.5L1263.1 1273.2L1282.7 1273.0L1300.0 1272.7L1315.7 1272.5L1330.9 1272.3L1345.5 1272.1L1359.3 1271.8L1372.4 1271.6L1384.4 1271.4L1395.3 1271.2L1404.9 1271.0L1413.2 1270.9L1420.0 1270.7Z" fill="#a31f1b"/>
<path d="M1438.0 1270.7L1444.9 1270.9L1453.5 1271.0L1463.4 1271.2L1474.7 1271.4L1487.1 1271.6L1500.4 1271.8L1514.5 1272.0L1529.2 1272.3L1544.4 1272.5L1560.0 1272.7L1576.9 1273.0L1596.1 1273.3L1616.8 1273.6L1638.4 1273.9L1660.3 1274.2L1681.8 1274.5L1702.2 1274.8L1720.9 1275.1L1737.2 1275.4L1750.6 1275.7L1760.8 1276.1L1768.6 1276.5L1774.3 1277.0L1778.4 1277.4L1781.2 1277.8L1783.2 1278.2L1784.8 1278.6L1786.5 1279.0L1788.7 1279.5L1791.7 1280.0L1794.7 1280.4L1797.0 1280.7L1798.9 1281.0L1800.5 1281.2L1802.1 1281.6L1804.1 1281.9L1806.6 1282.4L1809.8 1283.0L1814.1 1283.8L1819.5 1284.7L1826.2 1285.8L1833.8 1287.1L1842.2 1288.5L1851.3 1290.1L1861.1 1291.7L1871.3 1293.4L1882.0 1295.2L1893.0 1297.0L1904.2 1298.7L1915.6 1300.5L1927.6 1302.2L1940.4 1304.1L1953.9 1306.1L1967.8 1308.0L1981.9 1310.0L1996.0 1312.0L2009.9 1313.8L2023.3 1315.6L2036.0 1317.1L2047.8 1318.5L2058.7 1319.6L2069.0 1320.6L2078.8 1321.4L2088.1 1322.1L2097.1 1322.7L2105.9 1323.2L2114.4 1323.7L2122.9 1324.1L2131.4 1324.5L2139.9 1325.0L2148.4 1325.5L2156.7 1325.9L2164.8 1326.2L2172.8 1326.6L2180.7 1326.9L2188.5 1327.1L2196.3 1327.4L2204.2 1327.6L2212.0 1327.8L2220.0 1328.0L2228.3 1328.2L2237.3 1328.3L2246.5 1328.4L2255.8 1328.5L2265.0 1328.6L2273.8 1328.6L2281.9 1328.7L2289.1 1328.7L2295.2 1328.7L2300.0 1328.7L2300.0 1327.3L2295.2 1327.2L2289.1 1327.1L2281.9 1327.0L2273.8 1326.9L2265.0 1326.8L2255.8 1326.7L2246.5 1326.6L2237.3 1326.4L2228.4 1326.2L2220.0 1326.0L2212.1 1325.7L2204.2 1325.4L2196.4 1325.1L2188.6 1324.7L2180.8 1324.4L2172.9 1324.0L2164.9 1323.5L2156.8 1323.1L2148.6 1322.6L2140.1 1322.0L2131.6 1321.4L2123.1 1320.9L2114.6 1320.4L2106.1 1319.8L2097.4 1319.2L2088.4 1318.5L2079.1 1317.7L2069.3 1316.8L2059.1 1315.7L2048.2 1314.5L2036.5 1313.1L2023.9 1311.4L2010.5 1309.6L1996.7 1307.6L1982.6 1305.6L1968.5 1303.5L1954.6 1301.4L1941.1 1299.4L1928.3 1297.4L1916.4 1295.5L1905.0 1293.8L1893.8 1291.9L1882.8 1290.1L1872.2 1288.3L1861.9 1286.5L1852.2 1284.8L1843.1 1283.2L1834.7 1281.8L1827.1 1280.4L1820.5 1279.3L1815.0 1278.4L1810.7 1277.7L1807.5 1277.1L1805.0 1276.7L1803.0 1276.4L1801.3 1276.1L1799.6 1275.9L1797.7 1275.6L1795.3 1275.4L1792.3 1275.0L1789.4 1274.7L1787.4 1274.4L1785.7 1274.1L1784.0 1273.8L1781.8 1273.6L1778.7 1273.3L1774.5 1273.0L1768.7 1272.8L1760.9 1272.5L1750.6 1272.3L1737.3 1271.9L1721.0 1271.6L1702.3 1271.3L1681.8 1271.0L1660.4 1270.7L1638.5 1270.4L1616.9 1270.1L1596.1 1269.8L1577.0 1269.5L1560.0 1269.3L1544.5 1269.0L1529.3 1268.8L1514.5 1268.5L1500.4 1268.3L1487.1 1268.1L1474.8 1267.9L1463.5 1267.7L1453.5 1267.5L1445.0 1267.4L1438.0 1267.3Z" fill="#8c1712"/>
<path d="M1424.3 558 L1439.8 558 L1439.3 1342 L1416.3 1342 Z" fill="url(#strv)"/>
<rect x="1418.5" y="1230" width="9" height="23" fill="#c9a064" opacity="0.75" filter="url(#b3)"/>
<path d="M1417 1184.2 H1439.5 V1188.6 H1417Z" fill="#8c1a12" opacity="0.85"/>
<path d="M1416.5 1267.2 H1430 V1271 H1416.5Z" fill="#8c1a12" opacity="0.7"/>
<path d="M1368 1294 Q1428 1284 1486 1294 Q1428 1303 1368 1294Z" fill="#141414" filter="url(#b1)"/>
<path d="M1372 1310 Q1430 1303 1487 1310 Q1430 1317 1372 1310Z" fill="#141414" filter="url(#b1)"/>
<path d="M779 1327 Q826 1322 875 1327 Q826 1331 779 1327Z" fill="#222" filter="url(#b1)"/>
<path d="M1982 1327 Q2030 1322 2078 1327 Q2030 1331 1982 1327Z" fill="#222" filter="url(#b1)"/>
</g>
<g>
<ellipse cx="1431" cy="692" rx="160" ry="14.5" fill="#ffffff" opacity="0.08"/>
<ellipse cx="1431" cy="692" rx="158" ry="13.5" fill="none" stroke="#3a3a3a" stroke-width="1.6" stroke-dasharray="1.6 6" opacity="0.7"/>
<ellipse cx="1431" cy="692" rx="155" ry="12" fill="none" stroke="#e8e8e8" stroke-width="1.4" stroke-dasharray="2 9" opacity="0.6"/>
<path d="M1311 686 L1322 683.5 L1345 683 L1359 688 L1355 695 L1340 693.5 L1329 689 Z" fill="#bb251a" stroke="#250604" stroke-width="1.3" stroke-dasharray="5 3"/>
<path d="M1384 683.5 L1392 680 L1425 680 L1418 686 L1400 688.5 L1388 687 Z" fill="#bb251a" stroke="#250604" stroke-width="1.3" stroke-dasharray="5 3"/>
<path d="M1369 697 L1385 695 L1406 699 L1400 704 L1378 704 Z" fill="#bb251a" stroke="#250604" stroke-width="1.3" stroke-dasharray="5 3"/>
<path d="M1398 690.5 L1420 686 L1440 692 L1462 699 L1480 701 L1476 704.5 L1450 703.5 L1425 697.5 L1408 695.5 Z" fill="#bb251a" stroke="#250604" stroke-width="1.3" stroke-dasharray="5 3"/>
<path d="M1441 681 L1462 680 L1471 684 L1465 688 L1450 687 Z" fill="#bb251a" stroke="#250604" stroke-width="1.3" stroke-dasharray="5 3"/>
<path d="M1472 683 L1498 683 L1488 688 L1487 694 L1497 699 L1478 697.5 L1470 690 Z" fill="#bb251a" stroke="#250604" stroke-width="1.3" stroke-dasharray="5 3"/>
<path d="M1500 685 L1525 684 L1514 689 L1513 694 L1524 698.5 L1505 697.5 L1498 691 Z" fill="#bb251a" stroke="#250604" stroke-width="1.3" stroke-dasharray="5 3"/>
<path d="M1526 686 L1537 685 L1531 690 L1536 696.5 L1527 695.5 L1523 690 Z" fill="#bb251a" stroke="#250604" stroke-width="1.3" stroke-dasharray="5 3"/>
<rect x="1293.4" y="690.3" width="2.4" height="2" fill="#1c1c1c" opacity="0.8"/>
<rect x="1573.1" y="690.9" width="2.4" height="2" fill="#1c1c1c" opacity="0.8"/>
<rect x="1555.8" y="685.4" width="2.4" height="2" fill="#1c1c1c" opacity="0.8"/>
<rect x="1562.3" y="699.3" width="2.4" height="2" fill="#1c1c1c" opacity="0.8"/>
<rect x="1557.2" y="694.6" width="2.4" height="2" fill="#1c1c1c" opacity="0.8"/>
<rect x="1575.6" y="690.4" width="2.4" height="2" fill="#1c1c1c" opacity="0.8"/>
<rect x="1552.4" y="687.1" width="2.4" height="2" fill="#1c1c1c" opacity="0.8"/>
<rect x="1380.8" y="691.6" width="2.4" height="2" fill="#1c1c1c" opacity="0.8"/>
<rect x="1358.8" y="694.7" width="2.4" height="2" fill="#1c1c1c" opacity="0.8"/>
<rect x="1367.2" y="689.0" width="2.4" height="2" fill="#1c1c1c" opacity="0.8"/>
<rect x="1387.7" y="697.0" width="2.4" height="2" fill="#1c1c1c" opacity="0.8"/>
<rect x="1354.6" y="694.5" width="2.4" height="2" fill="#1c1c1c" opacity="0.8"/>
<rect x="1371.5" y="700.5" width="2.4" height="2" fill="#1c1c1c" opacity="0.8"/>
<rect x="1383.8" y="688.8" width="2.4" height="2" fill="#1c1c1c" opacity="0.8"/>
<rect x="1398.8" y="685.4" width="2.4" height="2" fill="#1c1c1c" opacity="0.8"/>
<rect x="1365.1" y="698.1" width="2.4" height="2" fill="#1c1c1c" opacity="0.8"/>
<rect x="1490.6" y="692.8" width="2.4" height="2" fill="#1c1c1c" opacity="0.8"/>
<rect x="1482.7" y="696.4" width="2.4" height="2" fill="#1c1c1c" opacity="0.8"/>
<rect x="1533.5" y="694.5" width="2.4" height="2" fill="#1c1c1c" opacity="0.8"/>
<rect x="1541.3" y="689.3" width="2.4" height="2" fill="#1c1c1c" opacity="0.8"/>
<rect x="1528.7" y="694.9" width="2.4" height="2" fill="#1c1c1c" opacity="0.8"/>
<rect x="1520.6" y="692.1" width="2.4" height="2" fill="#1c1c1c" opacity="0.8"/>
<rect x="1513.2" y="696.3" width="2.4" height="2" fill="#1c1c1c" opacity="0.8"/>
<rect x="1484.2" y="697.0" width="2.4" height="2" fill="#1c1c1c" opacity="0.8"/>
</g>
</svg></div>
<div id="status" class="abs"></div>
<div class="st" style="left:7px">Press F1 for help</div>
<div class="pane" style="left:2176px;width:50px"></div>
<div class="st" style="left:2185px">cm</div>
<div class="pane" style="left:2232px;width:139px"></div>
<div class="st" style="left:2240px">X: -26.0</div>
<div class="pane" style="left:2378px;width:139px"></div>
<div class="st" style="left:2387px">Y: 33.2</div>
<div class="pane" style="left:2524px;width:139px"></div>
<div class="st" style="left:2533px">Z: 0.0</div>
<div class="pane" style="left:2670px;width:52px"></div>
<div class="st" style="left:2678px">MAJ</div>
<div class="pane" style="left:2728px;width:60px"></div>
<div class="pane" style="left:2794px;width:48px"></div>
<svg width="2880" height="1800" viewBox="0 0 2880 1800" style="position:absolute;left:0;top:0;pointer-events:none">
<path d="M2856 1798 L2878 1776 M2864 1798 L2878 1784 M2872 1798 L2878 1792" stroke="#8c8c90" stroke-width="2.6"/>
<path d="M0 1800 V1788 Q1 1799 12 1800 Z" fill="#1a1a1a"/>
<path d="M2880 1800 V1788 Q2879 1799 2868 1800 Z" fill="#1a1a1a"/>
</svg>
</body></html>
